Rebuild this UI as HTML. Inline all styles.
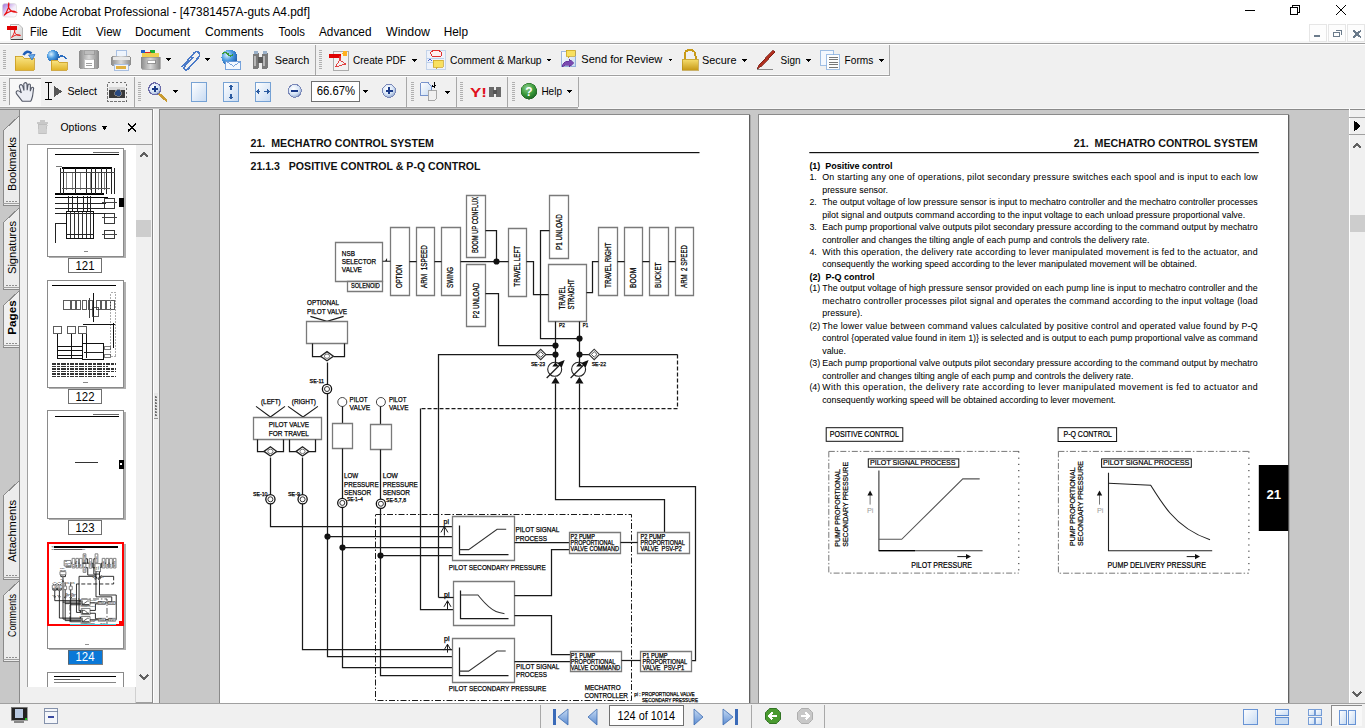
<!DOCTYPE html><html><head><meta charset="utf-8"><style>html,body{margin:0;padding:0;width:1365px;height:728px;overflow:hidden;background:#f0f0f0;font-family:"Liberation Sans",sans-serif}svg{position:absolute;left:0;top:0;--k:1}text{font-family:"Liberation Sans",sans-serif;white-space:pre}#d1 path,#d1 rect,#d1 circle,#d1 ellipse{vector-effect:non-scaling-stroke}</style></head><body>
<svg width="1365" height="728" viewBox="0 0 1365 728" shape-rendering="crispEdges">
<rect x="0" y="0" width="1365" height="43" fill="#ffffff" stroke="none" stroke-width="1" />
<rect x="0" y="41" width="1365" height="2" fill="#f6f6f6" stroke="none" stroke-width="1" />
<rect x="0" y="43" width="1365" height="1" fill="#a0a0a0" stroke="none" stroke-width="1" />
<rect x="0" y="44" width="1365" height="1" fill="#ffffff" stroke="none" stroke-width="1" />
<rect x="0" y="45" width="1365" height="659" fill="#f0f0f0" stroke="none" stroke-width="1" />
<defs><linearGradient id="gApp" x1="0" y1="0" x2="1" y2="1"><stop offset="0" stop-color="#a070d8"/><stop offset="0.55" stop-color="#f4ecfa"/><stop offset="1" stop-color="#ffffff"/></linearGradient><linearGradient id="gDoc" x1="0" y1="0" x2="1" y2="1"><stop offset="0" stop-color="#ffffff"/><stop offset="1" stop-color="#d0d0d0"/></linearGradient></defs>
<rect x="2.5" y="3.5" width="14" height="13.5" rx="2.5" fill="url(#gApp)" stroke="#d8d8d8" stroke-width="0.6" shape-rendering="geometricPrecision"/>
<path d="M4 15.5 Q7 12 8.3 8 Q9.3 4.5 8.8 3.2 Q8 4.5 8.4 7 Q9.4 10 12 11.5 Q14 12.5 16.3 12.2 Q14 10.8 11 11.3 Q7 12.2 4 15.5" fill="none" stroke="#e81010" stroke-width="1.1" shape-rendering="geometricPrecision"/>
<text x="23" y="16" font-size="12" font-weight="normal" fill="#000" text-anchor="start" textLength="287" lengthAdjust="spacingAndGlyphs" >Adobe Acrobat Professional - [47381457A-guts A4.pdf]</text>
<line x1="1245" y1="10.5" x2="1255" y2="10.5" stroke="#000" stroke-width="1" />
<rect x="1290.5" y="7.5" width="7" height="7" fill="none" stroke="#000" stroke-width="1" />
<path d="M1292.5 7.5 V5.5 H1299.5 V12.5 H1297.5" stroke="#000" fill="none" stroke-width="1" />
<line x1="1336" y1="5" x2="1346" y2="15" stroke="#000" stroke-width="1" />
<line x1="1346" y1="5" x2="1336" y2="15" stroke="#000" stroke-width="1" />
<path d="M10.5 24.5 H19 L22.5 28 V39.5 H10.5 Z" fill="url(#gDoc)" stroke="#a8a8a8" stroke-width="0.8" shape-rendering="geometricPrecision"/>
<rect x="10.5" y="39" width="12" height="1" fill="#404040" stroke="none" stroke-width="1" />
<rect x="7" y="26" width="10" height="3.5" fill="#e00000" stroke="none" stroke-width="1" />
<path d="M11.5 37.5 Q13.5 35 14.5 32 Q15 30 14.8 29.5 Q14.2 30.5 14.6 32 Q15.3 34 17 35 Q19 35.6 20.5 35.4 Q19 34.6 16.8 34.8 Q14 35.5 11.5 37.5" fill="none" stroke="#e81010" stroke-width="0.9" shape-rendering="geometricPrecision"/>
<text x="30" y="36" font-size="12" font-weight="normal" fill="#000" text-anchor="start" textLength="17.6" lengthAdjust="spacingAndGlyphs" >File</text>
<text x="62" y="36" font-size="12" font-weight="normal" fill="#000" text-anchor="start" textLength="19" lengthAdjust="spacingAndGlyphs" >Edit</text>
<text x="96" y="36" font-size="12" font-weight="normal" fill="#000" text-anchor="start" textLength="25" lengthAdjust="spacingAndGlyphs" >View</text>
<text x="135" y="36" font-size="12" font-weight="normal" fill="#000" text-anchor="start" textLength="55" lengthAdjust="spacingAndGlyphs" >Document</text>
<text x="205" y="36" font-size="12" font-weight="normal" fill="#000" text-anchor="start" textLength="58.5" lengthAdjust="spacingAndGlyphs" >Comments</text>
<text x="278.5" y="36" font-size="12" font-weight="normal" fill="#000" text-anchor="start" textLength="26.5" lengthAdjust="spacingAndGlyphs" >Tools</text>
<text x="319" y="36" font-size="12" font-weight="normal" fill="#000" text-anchor="start" textLength="52.5" lengthAdjust="spacingAndGlyphs" >Advanced</text>
<text x="386" y="36" font-size="12" font-weight="normal" fill="#000" text-anchor="start" textLength="44" lengthAdjust="spacingAndGlyphs" >Window</text>
<text x="443.7" y="36" font-size="12" font-weight="normal" fill="#000" text-anchor="start" textLength="24.3" lengthAdjust="spacingAndGlyphs" >Help</text>
<rect x="1309.5" y="24.5" width="17" height="17" fill="#fdfdfd" stroke="#e6e6e6" stroke-width="1" />
<rect x="1328.5" y="24.5" width="17" height="17" fill="#fdfdfd" stroke="#e6e6e6" stroke-width="1" />
<rect x="1347.5" y="24.5" width="17" height="17" fill="#fdfdfd" stroke="#e6e6e6" stroke-width="1" />
<rect x="1314" y="35" width="6" height="2" fill="#6b7b8b" stroke="none" stroke-width="1" />
<rect x="1333.5" y="32.5" width="6" height="4" fill="none" stroke="#6b7b8b" stroke-width="1.3" />
<path d="M1335.5 30.5 H1341.5 V34.5" stroke="#6b7b8b" fill="none" stroke-width="1.3" />
<path d="M1353.5 30.5 L1361 37.5 M1361 30.5 L1353.5 37.5" stroke="#6b7b8b" fill="none" stroke-width="2" />
<rect x="0" y="74" width="890" height="1" fill="#f8f8f8" stroke="none" stroke-width="1" />
<rect x="0" y="75" width="890" height="1" fill="#a0a0a0" stroke="none" stroke-width="1" />
<rect x="0" y="76" width="890" height="1" fill="#ffffff" stroke="none" stroke-width="1" />
<rect x="0" y="106" width="578" height="1" fill="#f8f8f8" stroke="none" stroke-width="1" />
<rect x="0" y="107" width="578" height="1" fill="#a0a0a0" stroke="none" stroke-width="1" />
<rect x="0" y="108" width="578" height="1" fill="#c8c8c8" stroke="none" stroke-width="1" />
<rect x="578" y="108" width="787" height="1" fill="#f8f8f8" stroke="none" stroke-width="1" />
<line x1="315.5" y1="45" x2="315.5" y2="75" stroke="#a8a8a8" stroke-width="1" />
<line x1="889.5" y1="45" x2="889.5" y2="75" stroke="#a8a8a8" stroke-width="1" />
<line x1="134.5" y1="77" x2="134.5" y2="107" stroke="#a8a8a8" stroke-width="1" />
<line x1="406.5" y1="77" x2="406.5" y2="107" stroke="#a8a8a8" stroke-width="1" />
<line x1="456.5" y1="77" x2="456.5" y2="107" stroke="#a8a8a8" stroke-width="1" />
<line x1="507.5" y1="77" x2="507.5" y2="107" stroke="#a8a8a8" stroke-width="1" />
<line x1="578.5" y1="77" x2="578.5" y2="107" stroke="#a8a8a8" stroke-width="1" />
<rect x="3" y="50" width="3" height="1" fill="#b0b0b0" stroke="none" stroke-width="1" />
<rect x="3" y="52" width="3" height="1" fill="#b0b0b0" stroke="none" stroke-width="1" />
<rect x="3" y="54" width="3" height="1" fill="#b0b0b0" stroke="none" stroke-width="1" />
<rect x="3" y="56" width="3" height="1" fill="#b0b0b0" stroke="none" stroke-width="1" />
<rect x="3" y="58" width="3" height="1" fill="#b0b0b0" stroke="none" stroke-width="1" />
<rect x="3" y="60" width="3" height="1" fill="#b0b0b0" stroke="none" stroke-width="1" />
<rect x="3" y="62" width="3" height="1" fill="#b0b0b0" stroke="none" stroke-width="1" />
<rect x="3" y="64" width="3" height="1" fill="#b0b0b0" stroke="none" stroke-width="1" />
<rect x="3" y="66" width="3" height="1" fill="#b0b0b0" stroke="none" stroke-width="1" />
<rect x="3" y="68" width="3" height="1" fill="#b0b0b0" stroke="none" stroke-width="1" />
<rect x="319" y="50" width="3" height="1" fill="#b0b0b0" stroke="none" stroke-width="1" />
<rect x="319" y="52" width="3" height="1" fill="#b0b0b0" stroke="none" stroke-width="1" />
<rect x="319" y="54" width="3" height="1" fill="#b0b0b0" stroke="none" stroke-width="1" />
<rect x="319" y="56" width="3" height="1" fill="#b0b0b0" stroke="none" stroke-width="1" />
<rect x="319" y="58" width="3" height="1" fill="#b0b0b0" stroke="none" stroke-width="1" />
<rect x="319" y="60" width="3" height="1" fill="#b0b0b0" stroke="none" stroke-width="1" />
<rect x="319" y="62" width="3" height="1" fill="#b0b0b0" stroke="none" stroke-width="1" />
<rect x="319" y="64" width="3" height="1" fill="#b0b0b0" stroke="none" stroke-width="1" />
<rect x="319" y="66" width="3" height="1" fill="#b0b0b0" stroke="none" stroke-width="1" />
<rect x="319" y="68" width="3" height="1" fill="#b0b0b0" stroke="none" stroke-width="1" />
<rect x="3" y="82" width="3" height="1" fill="#b0b0b0" stroke="none" stroke-width="1" />
<rect x="3" y="84" width="3" height="1" fill="#b0b0b0" stroke="none" stroke-width="1" />
<rect x="3" y="86" width="3" height="1" fill="#b0b0b0" stroke="none" stroke-width="1" />
<rect x="3" y="88" width="3" height="1" fill="#b0b0b0" stroke="none" stroke-width="1" />
<rect x="3" y="90" width="3" height="1" fill="#b0b0b0" stroke="none" stroke-width="1" />
<rect x="3" y="92" width="3" height="1" fill="#b0b0b0" stroke="none" stroke-width="1" />
<rect x="3" y="94" width="3" height="1" fill="#b0b0b0" stroke="none" stroke-width="1" />
<rect x="3" y="96" width="3" height="1" fill="#b0b0b0" stroke="none" stroke-width="1" />
<rect x="3" y="98" width="3" height="1" fill="#b0b0b0" stroke="none" stroke-width="1" />
<rect x="3" y="100" width="3" height="1" fill="#b0b0b0" stroke="none" stroke-width="1" />
<rect x="138" y="82" width="3" height="1" fill="#b0b0b0" stroke="none" stroke-width="1" />
<rect x="138" y="84" width="3" height="1" fill="#b0b0b0" stroke="none" stroke-width="1" />
<rect x="138" y="86" width="3" height="1" fill="#b0b0b0" stroke="none" stroke-width="1" />
<rect x="138" y="88" width="3" height="1" fill="#b0b0b0" stroke="none" stroke-width="1" />
<rect x="138" y="90" width="3" height="1" fill="#b0b0b0" stroke="none" stroke-width="1" />
<rect x="138" y="92" width="3" height="1" fill="#b0b0b0" stroke="none" stroke-width="1" />
<rect x="138" y="94" width="3" height="1" fill="#b0b0b0" stroke="none" stroke-width="1" />
<rect x="138" y="96" width="3" height="1" fill="#b0b0b0" stroke="none" stroke-width="1" />
<rect x="138" y="98" width="3" height="1" fill="#b0b0b0" stroke="none" stroke-width="1" />
<rect x="138" y="100" width="3" height="1" fill="#b0b0b0" stroke="none" stroke-width="1" />
<rect x="411" y="82" width="3" height="1" fill="#b0b0b0" stroke="none" stroke-width="1" />
<rect x="411" y="84" width="3" height="1" fill="#b0b0b0" stroke="none" stroke-width="1" />
<rect x="411" y="86" width="3" height="1" fill="#b0b0b0" stroke="none" stroke-width="1" />
<rect x="411" y="88" width="3" height="1" fill="#b0b0b0" stroke="none" stroke-width="1" />
<rect x="411" y="90" width="3" height="1" fill="#b0b0b0" stroke="none" stroke-width="1" />
<rect x="411" y="92" width="3" height="1" fill="#b0b0b0" stroke="none" stroke-width="1" />
<rect x="411" y="94" width="3" height="1" fill="#b0b0b0" stroke="none" stroke-width="1" />
<rect x="411" y="96" width="3" height="1" fill="#b0b0b0" stroke="none" stroke-width="1" />
<rect x="411" y="98" width="3" height="1" fill="#b0b0b0" stroke="none" stroke-width="1" />
<rect x="411" y="100" width="3" height="1" fill="#b0b0b0" stroke="none" stroke-width="1" />
<rect x="460" y="82" width="3" height="1" fill="#b0b0b0" stroke="none" stroke-width="1" />
<rect x="460" y="84" width="3" height="1" fill="#b0b0b0" stroke="none" stroke-width="1" />
<rect x="460" y="86" width="3" height="1" fill="#b0b0b0" stroke="none" stroke-width="1" />
<rect x="460" y="88" width="3" height="1" fill="#b0b0b0" stroke="none" stroke-width="1" />
<rect x="460" y="90" width="3" height="1" fill="#b0b0b0" stroke="none" stroke-width="1" />
<rect x="460" y="92" width="3" height="1" fill="#b0b0b0" stroke="none" stroke-width="1" />
<rect x="460" y="94" width="3" height="1" fill="#b0b0b0" stroke="none" stroke-width="1" />
<rect x="460" y="96" width="3" height="1" fill="#b0b0b0" stroke="none" stroke-width="1" />
<rect x="460" y="98" width="3" height="1" fill="#b0b0b0" stroke="none" stroke-width="1" />
<rect x="460" y="100" width="3" height="1" fill="#b0b0b0" stroke="none" stroke-width="1" />
<rect x="512" y="82" width="3" height="1" fill="#b0b0b0" stroke="none" stroke-width="1" />
<rect x="512" y="84" width="3" height="1" fill="#b0b0b0" stroke="none" stroke-width="1" />
<rect x="512" y="86" width="3" height="1" fill="#b0b0b0" stroke="none" stroke-width="1" />
<rect x="512" y="88" width="3" height="1" fill="#b0b0b0" stroke="none" stroke-width="1" />
<rect x="512" y="90" width="3" height="1" fill="#b0b0b0" stroke="none" stroke-width="1" />
<rect x="512" y="92" width="3" height="1" fill="#b0b0b0" stroke="none" stroke-width="1" />
<rect x="512" y="94" width="3" height="1" fill="#b0b0b0" stroke="none" stroke-width="1" />
<rect x="512" y="96" width="3" height="1" fill="#b0b0b0" stroke="none" stroke-width="1" />
<rect x="512" y="98" width="3" height="1" fill="#b0b0b0" stroke="none" stroke-width="1" />
<rect x="512" y="100" width="3" height="1" fill="#b0b0b0" stroke="none" stroke-width="1" />
<defs>
<linearGradient id="gFold" x1="0" y1="0" x2="0" y2="1"><stop offset="0" stop-color="#fbe88a"/><stop offset="1" stop-color="#e2b52a"/></linearGradient>
<linearGradient id="gGray" x1="0" y1="0" x2="1" y2="0"><stop offset="0" stop-color="#8a8a8a"/><stop offset="0.5" stop-color="#d8d8d8"/><stop offset="1" stop-color="#8a8a8a"/></linearGradient>
<radialGradient id="gGlobe" cx="0.35" cy="0.35" r="0.7"><stop offset="0" stop-color="#d8f0ff"/><stop offset="0.5" stop-color="#4a9ae0"/><stop offset="1" stop-color="#1d5aa8"/></radialGradient>
<linearGradient id="gPage" x1="0" y1="0" x2="1" y2="1"><stop offset="0" stop-color="#ffffff"/><stop offset="1" stop-color="#c6daf2"/></linearGradient>
<radialGradient id="gZoom" cx="0.4" cy="0.35" r="0.7"><stop offset="0" stop-color="#ffffff"/><stop offset="0.6" stop-color="#d6e4f6"/><stop offset="1" stop-color="#8ea6cc"/></radialGradient>
<radialGradient id="gHelp" cx="0.4" cy="0.3" r="0.7"><stop offset="0" stop-color="#8fd08f"/><stop offset="0.6" stop-color="#3a9a3a"/><stop offset="1" stop-color="#1f6a25"/></radialGradient>
<linearGradient id="gLock" x1="0" y1="0" x2="0" y2="1"><stop offset="0" stop-color="#f8e070"/><stop offset="1" stop-color="#c89a18"/></linearGradient>
</defs>
<path d="M15 56 h7 l2 2 h10 v12 h-19 z" stroke="#c89a20" fill="url(#gFold)" stroke-width="0.8" />
<path d="M23.5 55 q3 -5.5 8 -1.5" stroke="#1f5fb8" fill="none" stroke-width="2.6" shape-rendering="geometricPrecision"/>
<path d="M28.5 55 l6.5 -0.5 l-3 5.5 z" stroke="#1f5fb8" fill="#6ab0ec" stroke-width="0.7" shape-rendering="geometricPrecision"/>
<circle cx="53" cy="56" r="6" fill="url(#gGlobe)"/>
<path d="M51 60 h6 l2 2 h8 v8 h-16 z" stroke="#c89a20" fill="url(#gFold)" stroke-width="0.8" />
<path d="M59 57 q4 -3 7 2" stroke="#2a6cc0" fill="none" stroke-width="1.6" />
<rect x="79" y="50" width="20" height="19" fill="url(#gGray)" stroke="none" stroke-width="1" rx="2.5"/>
<rect x="84" y="50" width="10" height="4" fill="#bdbdbd" stroke="#8a8a8a" stroke-width="0.5" />
<rect x="84" y="59" width="10" height="9" fill="#ffffff" stroke="#8a8a8a" stroke-width="0.5" />
<line x1="86" y1="63" x2="92" y2="63" stroke="#888" stroke-width="0.8" />
<line x1="86" y1="65.5" x2="92" y2="65.5" stroke="#888" stroke-width="0.8" />
<rect x="116" y="50" width="10" height="8" fill="#eef4fc" stroke="#8aaad8" stroke-width="0.7" />
<rect x="111" y="56" width="20" height="10" fill="url(#gGray)" stroke="none" stroke-width="1" rx="2.5"/>
<rect x="112.5" y="57" width="17" height="3" fill="#e8e8e8" stroke="none" stroke-width="1" />
<rect x="114" y="64" width="14" height="6" fill="#f4f4f4" stroke="#8aaad8" stroke-width="0.7" />
<rect x="116" y="66" width="10" height="3" fill="#e0b040" stroke="none" stroke-width="1" />
<rect x="141" y="50" width="4" height="3" fill="#2060c8" stroke="none" stroke-width="1" />
<rect x="150" y="50" width="5" height="3" fill="#20b030" stroke="none" stroke-width="1" />
<rect x="145" y="52" width="6" height="3" fill="#e02020" stroke="none" stroke-width="1" />
<rect x="142" y="53" width="17" height="4" fill="#f0d050" stroke="none" stroke-width="1" />
<path d="M141 57 h19 v12 h-18 l-1 -3 z" stroke="#888" fill="url(#gGray)" stroke-width="0.6" />
<rect x="147" y="60" width="8" height="3" fill="#ffffff" stroke="#777" stroke-width="0.6" />
<path d="M166 58 h5 l-2.5 3 z" stroke="none" fill="#000" stroke-width="1" />
<path d="M182 67 l12 -14 q3 -3 5 0 q2 2 -1 5 l-10 11 q-2 2 -3.5 0.5 q-1.5 -1.5 0.5 -3.5 l8 -9" stroke="#4a7ac8" fill="none" stroke-width="1.6" />
<path d="M205 58 h5 l-2.5 3 z" stroke="none" fill="#000" stroke-width="1" />
<circle cx="229.5" cy="57.5" r="8" fill="url(#gGlobe)"/>
<path d="M222 54 q3 -3 6 0 q2 3 5 1" stroke="#3a9a3a" fill="none" stroke-width="1.5" />
<rect x="225.5" y="61.5" width="15" height="8" fill="#f4f8fe" stroke="#6a9ad8" stroke-width="0.9" />
<path d="M225.5 61.5 l7.5 5 l7.5 -5" stroke="#6a9ad8" fill="none" stroke-width="0.9" />
<rect x="253" y="53" width="6" height="16" fill="#7a7a7a" stroke="none" stroke-width="1" rx="2"/>
<rect x="262" y="53" width="6" height="16" fill="#7a7a7a" stroke="none" stroke-width="1" rx="2"/>
<rect x="254" y="51" width="4" height="3" fill="#9ab0c8" stroke="none" stroke-width="1" />
<rect x="263" y="51" width="4" height="3" fill="#9ab0c8" stroke="none" stroke-width="1" />
<rect x="258" y="57" width="5" height="6" fill="#5a5a5a" stroke="none" stroke-width="1" />
<rect x="254" y="56" width="1.5" height="10" fill="#b8b8b8" stroke="none" stroke-width="1" />
<rect x="263" y="56" width="1.5" height="10" fill="#b8b8b8" stroke="none" stroke-width="1" />
<text x="274.7" y="64" font-size="11" font-weight="normal" fill="#000" text-anchor="start" textLength="34.7" lengthAdjust="spacingAndGlyphs" >Search</text>
<rect x="333" y="51" width="15" height="19" fill="#f2f2f2" stroke="#9a9a9a" stroke-width="0.8" />
<rect x="329" y="53.5" width="12" height="4" fill="#e00000" stroke="none" stroke-width="1" />
<path d="M335 67 l4 -6 l1 -5 l1 5 l5 3 z" stroke="#e03030" fill="none" stroke-width="0.9" />
<circle cx="345" cy="53.5" r="2.5" fill="#ffb020"/>
<text x="353" y="64" font-size="11" font-weight="normal" fill="#000" text-anchor="start" textLength="53" lengthAdjust="spacingAndGlyphs" >Create PDF</text>
<path d="M412 59 h5 l-2.5 3 z" stroke="none" fill="#000" stroke-width="1" />
<rect x="426" y="50" width="19.5" height="19.5" fill="#eef2fa" stroke="#a8c0e0" stroke-width="0.6" />
<path d="M431 52 q2 -2 5 -1 q3 -1 5 1 q2 2 0 4 h-9 q-2 -2 -1 -4 z" stroke="#e03030" fill="#fff0f0" stroke-width="1" />
<line x1="427" y1="58" x2="444" y2="58" stroke="#9ab8e0" stroke-width="0.6" />
<line x1="427" y1="62" x2="435" y2="62" stroke="#9ab8e0" stroke-width="0.6" />
<path d="M428 61 l2 -2 l2 2" stroke="#2040c0" fill="none" stroke-width="0.8" />
<path d="M433 60 h10 v7 h-5 l-2 2 v-2 h-3 z" stroke="#c8a020" fill="#f8e060" stroke-width="0.7" />
<text x="450" y="64" font-size="11" font-weight="normal" fill="#000" text-anchor="start" textLength="91.6" lengthAdjust="spacingAndGlyphs" >Comment &amp; Markup</text>
<path d="M546.5 59 h5 l-2.5 3 z" stroke="none" fill="#000" stroke-width="1" />
<rect x="561" y="51" width="14.5" height="15.5" fill="url(#gPage)" stroke="#7a9ad0" stroke-width="0.7" />
<path d="M566 50 h9 v6 h-5 l-2 2 v-2 h-2 z" stroke="#c8a020" fill="#f8e060" stroke-width="0.7" />
<path d="M562 66 q1 -5 7 -5 v-2 l5 4 l-5 4 v-2 q-4 0 -7 2 z" stroke="#5a2a90" fill="#7a4ab0" stroke-width="0.6" />
<text x="581.3" y="63" font-size="11" font-weight="normal" fill="#000" text-anchor="start" textLength="81" lengthAdjust="spacingAndGlyphs" >Send for Review</text>
<path d="M668 58.5 h5 l-2.5 3 z" stroke="none" fill="#000" stroke-width="1" />
<path d="M684.5 60 v-4 q0 -6 5.5 -6 q5.5 0 5.5 6 v4" stroke="#c89a18" fill="none" stroke-width="2" />
<rect x="682" y="59" width="16" height="11" fill="url(#gLock)" stroke="#b08810" stroke-width="0.6" />
<text x="702" y="64" font-size="11" font-weight="normal" fill="#000" text-anchor="start" textLength="34.5" lengthAdjust="spacingAndGlyphs" >Secure</text>
<path d="M742 59 h5 l-2.5 3 z" stroke="none" fill="#000" stroke-width="1" />
<path d="M757 69 l2 -4 l13 -14 q2 -1 3 1 l-13 14 z" stroke="#701810" fill="#b03020" stroke-width="0.7" />
<line x1="757" y1="69.5" x2="773" y2="69.5" stroke="#707070" stroke-width="0.8" />
<text x="780.5" y="64" font-size="11" font-weight="normal" fill="#000" text-anchor="start" textLength="20" lengthAdjust="spacingAndGlyphs" >Sign</text>
<path d="M806 59 h5 l-2.5 3 z" stroke="none" fill="#000" stroke-width="1" />
<rect x="820.5" y="50.5" width="13" height="15" fill="#f4f8fe" stroke="#8ab0e0" stroke-width="0.8" />
<rect x="826.5" y="54.5" width="13" height="15" fill="#fdfdfd" stroke="#8ab0e0" stroke-width="0.8" />
<line x1="828.5" y1="57" x2="837.5" y2="57" stroke="#555" stroke-width="0.8" />
<line x1="828.5" y1="59.5" x2="837.5" y2="59.5" stroke="#555" stroke-width="0.8" />
<line x1="828.5" y1="62" x2="837.5" y2="62" stroke="#555" stroke-width="0.8" />
<line x1="828.5" y1="64.5" x2="837.5" y2="64.5" stroke="#555" stroke-width="0.8" />
<line x1="828.5" y1="67" x2="837.5" y2="67" stroke="#555" stroke-width="0.8" />
<text x="844.6" y="64" font-size="11" font-weight="normal" fill="#000" text-anchor="start" textLength="28.7" lengthAdjust="spacingAndGlyphs" >Forms</text>
<path d="M879 59 h5 l-2.5 3 z" stroke="none" fill="#000" stroke-width="1" />
<rect x="9.5" y="78.5" width="31" height="27" fill="#f8f8f8" stroke="none" stroke-width="1" />
<path d="M9.5 105 V78.5 H40.5" stroke="#a0a0a0" fill="none" stroke-width="1" />
<path d="M22.4 101.3 L16.8 94.2 Q15.2 91.8 17.4 90.8 Q19.2 90.2 21.4 93 L19.4 86.8 Q19.4 84.4 21.2 84.6 Q22.6 84.9 23 87 L24 90.5 L23.8 83.8 Q25.3 81.6 26.9 83.6 L27.2 90.2 L28 84.8 Q29.2 83.2 30.4 84.9 L30.3 91.2 L31.3 88.2 Q32.8 86.3 33.6 88.3 L32.6 96 Q31.6 100 30.7 101.3 Z" stroke="#555a68" fill="#eceef5" stroke-width="1.1" shape-rendering="geometricPrecision"/>
<path d="M45 82.5 h3.5 M48.5 82.5 h3.5 M48.5 82.5 v17 M45 99.5 h7" stroke="#000" fill="none" stroke-width="1.2" />
<path d="M54 86 l8 5.5 l-8 5.5 z" stroke="none" fill="#555" stroke-width="1" />
<text x="67.4" y="94.6" font-size="11" font-weight="normal" fill="#000" text-anchor="start" textLength="29.5" lengthAdjust="spacingAndGlyphs" >Select</text>
<rect x="107.5" y="82.5" width="19" height="19" fill="none" stroke="#555" stroke-width="0.8" stroke-dasharray="2.5 1.5"/>
<rect x="109" y="87" width="16" height="11" fill="#3a3a3a" stroke="none" stroke-width="1" rx="1"/>
<rect x="109" y="87" width="16" height="3" fill="#d8d8d8" stroke="none" stroke-width="1" />
<circle cx="118" cy="93" r="3.5" fill="#2a4a80" stroke="#888" stroke-width="0.8"/>
<line x1="158" y1="93" x2="167" y2="101" stroke="#c89a30" stroke-width="2.4" />
<circle cx="154.7" cy="88.8" r="6" fill="url(#gZoom)" stroke="#6a6aa8" stroke-width="1.2"/>
<path d="M151.5 88.8 h6.5 M154.7 85.5 v6.5" stroke="#1a3a88" fill="none" stroke-width="1.8" />
<path d="M173 90 h5 l-2.5 3 z" stroke="none" fill="#000" stroke-width="1" />
<rect x="191.5" y="82.5" width="15" height="19" fill="url(#gPage)" stroke="#6a9ad0" stroke-width="0.9" />
<rect x="223.5" y="82.5" width="15" height="19" fill="url(#gPage)" stroke="#6a9ad0" stroke-width="0.9" />
<path d="M231 85 v5 M229 87 l2 -2 l2 2 M231 94 v5 M229 97 l2 2 l2 -2" stroke="#2a5aa0" fill="none" stroke-width="1.2" />
<rect x="255.5" y="82.5" width="15" height="19" fill="url(#gPage)" stroke="#6a9ad0" stroke-width="0.9" />
<path d="M257 91.5 h3 M259 89.5 l-2 2 l2 2 M264 91.5 h5 M267 89.5 l2 2 l-2 2" stroke="#2a5aa0" fill="none" stroke-width="1.2" />
<circle cx="294.8" cy="90.8" r="6.5" fill="url(#gZoom)" stroke="#7a88b8" stroke-width="1"/>
<path d="M291.3 90.8 h7" stroke="#1a3a88" fill="none" stroke-width="1.8" />
<circle cx="389" cy="90.8" r="6.5" fill="url(#gZoom)" stroke="#7a88b8" stroke-width="1"/>
<path d="M385.5 90.8 h7" stroke="#1a3a88" fill="none" stroke-width="1.8" />
<path d="M389 87.3 v7" stroke="#1a3a88" fill="none" stroke-width="1.8" />
<rect x="311.5" y="81.5" width="48" height="20" fill="#ffffff" stroke="#707070" stroke-width="1" />
<text x="316.7" y="94.6" font-size="12" font-weight="normal" fill="#000" text-anchor="start" textLength="38.5" lengthAdjust="spacingAndGlyphs" >66.67%</text>
<path d="M363 90 h5 l-2.5 3 z" stroke="none" fill="#000" stroke-width="1" />
<path d="M420.5 82.5 h8 l3 3 v10 h-11 z" stroke="#6a8ac8" fill="url(#gPage)" stroke-width="0.9" />
<path d="M428 90.5 h8.5 v7 l-3 3 h-5.5 z" stroke="#a0a0a0" fill="#f0f0f0" stroke-width="0.9" />
<path d="M434 82 v5 l-2 -1.5 M434 87 l2 -1.5" stroke="#000" fill="none" stroke-width="1" />
<path d="M445 91 h5 l-2.5 3 z" stroke="none" fill="#000" stroke-width="1" />
<text x="470" y="97" font-size="12" font-weight="bold" fill="#e01020" text-anchor="start" textLength="17" lengthAdjust="spacingAndGlyphs" font-family="Liberation Serif">Y!</text>
<rect x="489" y="87" width="5" height="10" fill="#6a6a6a" stroke="none" stroke-width="1" rx="1.5"/>
<rect x="496" y="87" width="5" height="10" fill="#6a6a6a" stroke="none" stroke-width="1" rx="1.5"/>
<rect x="493" y="90" width="4" height="4" fill="#555" stroke="none" stroke-width="1" />
<circle cx="529" cy="91.2" r="8" fill="url(#gHelp)" stroke="#2a6a2a" stroke-width="0.6"/>
<text x="529" y="95.5" font-size="12" font-weight="bold" fill="#ffffff" text-anchor="middle" >?</text>
<text x="541.4" y="95" font-size="11" font-weight="normal" fill="#000" text-anchor="start" textLength="20.6" lengthAdjust="spacingAndGlyphs" >Help</text>
<path d="M567 90 h5 l-2.5 3 z" stroke="none" fill="#000" stroke-width="1" />
<rect x="0" y="109" width="20" height="595" fill="#c8c8c8" stroke="none" stroke-width="1" />
<line x1="19.5" y1="109" x2="19.5" y2="703" stroke="#8a8a8a" stroke-width="1" />
<path d="M20 115 L3 131 V205 H20" stroke="#8a8a8a" fill="#ececec" stroke-width="1" />
<rect x="6" y="201" width="2" height="1" fill="#909090" stroke="none" stroke-width="1" />
<rect x="9" y="201" width="2" height="1" fill="#909090" stroke="none" stroke-width="1" />
<rect x="12" y="201" width="2" height="1" fill="#909090" stroke="none" stroke-width="1" />
<rect x="15" y="201" width="2" height="1" fill="#909090" stroke="none" stroke-width="1" />
<rect x="3" y="203" width="17" height="1" fill="#a0a0a0" stroke="none" stroke-width="1" />
<text x="0" y="0" font-size="11" font-weight="normal" fill="#000" text-anchor="middle" textLength="54" lengthAdjust="spacingAndGlyphs" transform="translate(15.5 164) rotate(-90)">Bookmarks</text>
<path d="M20 207 L3 223 V289 H20" stroke="#8a8a8a" fill="#ececec" stroke-width="1" />
<rect x="6" y="285" width="2" height="1" fill="#909090" stroke="none" stroke-width="1" />
<rect x="9" y="285" width="2" height="1" fill="#909090" stroke="none" stroke-width="1" />
<rect x="12" y="285" width="2" height="1" fill="#909090" stroke="none" stroke-width="1" />
<rect x="15" y="285" width="2" height="1" fill="#909090" stroke="none" stroke-width="1" />
<rect x="3" y="287" width="17" height="1" fill="#a0a0a0" stroke="none" stroke-width="1" />
<text x="0" y="0" font-size="11" font-weight="normal" fill="#000" text-anchor="middle" textLength="53" lengthAdjust="spacingAndGlyphs" transform="translate(15.5 247.5) rotate(-90)">Signatures</text>
<path d="M20 290 L3 306 V347 H20" stroke="#8a8a8a" fill="#f0f0f0" stroke-width="1" />
<rect x="6" y="343" width="2" height="1" fill="#909090" stroke="none" stroke-width="1" />
<rect x="9" y="343" width="2" height="1" fill="#909090" stroke="none" stroke-width="1" />
<rect x="12" y="343" width="2" height="1" fill="#909090" stroke="none" stroke-width="1" />
<rect x="15" y="343" width="2" height="1" fill="#909090" stroke="none" stroke-width="1" />
<rect x="3" y="345" width="17" height="1" fill="#a0a0a0" stroke="none" stroke-width="1" />
<text x="0" y="0" font-size="11" font-weight="bold" fill="#000" text-anchor="middle" textLength="34.3" lengthAdjust="spacingAndGlyphs" transform="translate(15.5 317.5) rotate(-90)">Pages</text>
<path d="M20 480 L3 496 V579 H20" stroke="#8a8a8a" fill="#ececec" stroke-width="1" />
<rect x="6" y="575" width="2" height="1" fill="#909090" stroke="none" stroke-width="1" />
<rect x="9" y="575" width="2" height="1" fill="#909090" stroke="none" stroke-width="1" />
<rect x="12" y="575" width="2" height="1" fill="#909090" stroke="none" stroke-width="1" />
<rect x="15" y="575" width="2" height="1" fill="#909090" stroke="none" stroke-width="1" />
<rect x="3" y="577" width="17" height="1" fill="#a0a0a0" stroke="none" stroke-width="1" />
<text x="0" y="0" font-size="11" font-weight="normal" fill="#000" text-anchor="middle" textLength="62" lengthAdjust="spacingAndGlyphs" transform="translate(15.5 531) rotate(-90)">Attachments</text>
<path d="M20 580 L3 596 V661 H20" stroke="#8a8a8a" fill="#ececec" stroke-width="1" />
<rect x="6" y="657" width="2" height="1" fill="#909090" stroke="none" stroke-width="1" />
<rect x="9" y="657" width="2" height="1" fill="#909090" stroke="none" stroke-width="1" />
<rect x="12" y="657" width="2" height="1" fill="#909090" stroke="none" stroke-width="1" />
<rect x="15" y="657" width="2" height="1" fill="#909090" stroke="none" stroke-width="1" />
<rect x="3" y="659" width="17" height="1" fill="#a0a0a0" stroke="none" stroke-width="1" />
<text x="0" y="0" font-size="11" font-weight="normal" fill="#000" text-anchor="middle" textLength="43" lengthAdjust="spacingAndGlyphs" transform="translate(15.5 615.5) rotate(-90)">Comments</text>
<line x1="19.5" y1="109" x2="19.5" y2="703" stroke="#8a8a8a" stroke-width="1" />
<rect x="20" y="109" width="133" height="595" fill="#f0f0f0" stroke="none" stroke-width="1" />
<line x1="0" y1="109.5" x2="159" y2="109.5" stroke="#8a8a8a" stroke-width="1" />
<line x1="152.5" y1="109" x2="152.5" y2="703" stroke="#8a8a8a" stroke-width="1" />
<rect x="37" y="122" width="11" height="2.5" fill="#c8c8c8" stroke="none" stroke-width="1" rx="1"/>
<rect x="40" y="120" width="5" height="2" fill="#c8c8c8" stroke="none" stroke-width="1" />
<path d="M38 124.5 h9 l-1 9 h-7 z" stroke="#b8b8b8" fill="#d0d0d0" stroke-width="0.6" />
<text x="60.5" y="131" font-size="11" font-weight="normal" fill="#000" text-anchor="start" textLength="36" lengthAdjust="spacingAndGlyphs" >Options</text>
<path d="M102 126 h5 l-2.5 3 z" stroke="#000" fill="#000" stroke-width="1" />
<path d="M128 124 L136 131 M136 124 L128 131" stroke="#000" fill="none" stroke-width="1.6" />
<line x1="27" y1="144.5" x2="152" y2="144.5" stroke="#a0a0a0" stroke-width="1" />
<rect x="27" y="145" width="109" height="542" fill="#ffffff" stroke="none" stroke-width="1" />
<line x1="27.5" y1="144" x2="27.5" y2="687" stroke="#a0a0a0" stroke-width="1" />
<rect x="136" y="145" width="16" height="558" fill="#f0f0f0" stroke="none" stroke-width="1" />
<rect x="136" y="220" width="15" height="17" fill="#cdcdcd" stroke="none" stroke-width="1" />
<path d="M140 157 l4 -4 l4 4" stroke="#606060" fill="none" stroke-width="1.6" />
<path d="M140 675 l4 4 l4 -4" stroke="#606060" fill="none" stroke-width="1.6" />
<rect x="27" y="687" width="109" height="16" fill="#f0f0f0" stroke="none" stroke-width="1" />
<line x1="27" y1="702.5" x2="152" y2="702.5" stroke="#a0a0a0" stroke-width="1" />
<line x1="135.5" y1="687" x2="135.5" y2="703" stroke="#d8d8d8" stroke-width="1" />
<rect x="153" y="109" width="6" height="595" fill="#f0f0f0" stroke="none" stroke-width="1" />
<line x1="153.5" y1="109" x2="153.5" y2="703" stroke="#ffffff" stroke-width="1" />
<defs><pattern id="dots" width="2" height="3" patternUnits="userSpaceOnUse"><rect width="1" height="1" fill="#999"/></pattern></defs>
<rect x="154" y="393" width="4" height="25" fill="#e6e6e6" stroke="none" stroke-width="1" />
<rect x="154" y="418" width="4" height="1" fill="#909090" stroke="none" stroke-width="1" />
<rect x="155" y="396" width="2" height="2" fill="#707070" stroke="none" stroke-width="1" />
<rect x="156" y="396" width="1" height="1" fill="#b0b0b0" stroke="none" stroke-width="1" />
<rect x="155" y="399" width="2" height="2" fill="#707070" stroke="none" stroke-width="1" />
<rect x="156" y="399" width="1" height="1" fill="#b0b0b0" stroke="none" stroke-width="1" />
<rect x="155" y="402" width="2" height="2" fill="#707070" stroke="none" stroke-width="1" />
<rect x="156" y="402" width="1" height="1" fill="#b0b0b0" stroke="none" stroke-width="1" />
<rect x="155" y="405" width="2" height="2" fill="#707070" stroke="none" stroke-width="1" />
<rect x="156" y="405" width="1" height="1" fill="#b0b0b0" stroke="none" stroke-width="1" />
<rect x="155" y="408" width="2" height="2" fill="#707070" stroke="none" stroke-width="1" />
<rect x="156" y="408" width="1" height="1" fill="#b0b0b0" stroke="none" stroke-width="1" />
<rect x="155" y="411" width="2" height="2" fill="#707070" stroke="none" stroke-width="1" />
<rect x="156" y="411" width="1" height="1" fill="#b0b0b0" stroke="none" stroke-width="1" />
<rect x="155" y="414" width="2" height="2" fill="#707070" stroke="none" stroke-width="1" />
<rect x="156" y="414" width="1" height="1" fill="#b0b0b0" stroke="none" stroke-width="1" />
<line x1="159.5" y1="109" x2="159.5" y2="703" stroke="#8a8a8a" stroke-width="1" />
<rect x="49" y="150" width="77" height="108" fill="#b0b0b0" stroke="none" stroke-width="1" />
<rect x="47.5" y="148.5" width="76" height="108" fill="#ffffff" stroke="#8a8a8a" stroke-width="1" />
<rect x="68.5" y="258.5" width="33" height="14" fill="#ffffff" stroke="#707070" stroke-width="1" />
<text x="85" y="269.5" font-size="12" font-weight="normal" fill="#000" text-anchor="middle" textLength="19" lengthAdjust="spacingAndGlyphs" >121</text>
<rect x="49" y="282" width="77" height="107" fill="#b0b0b0" stroke="none" stroke-width="1" />
<rect x="47.5" y="280.5" width="76" height="107" fill="#ffffff" stroke="#8a8a8a" stroke-width="1" />
<rect x="68.5" y="389.5" width="33" height="14" fill="#ffffff" stroke="#707070" stroke-width="1" />
<text x="85" y="400.5" font-size="12" font-weight="normal" fill="#000" text-anchor="middle" textLength="19" lengthAdjust="spacingAndGlyphs" >122</text>
<rect x="49" y="412" width="77" height="108" fill="#b0b0b0" stroke="none" stroke-width="1" />
<rect x="47.5" y="410.5" width="76" height="108" fill="#ffffff" stroke="#8a8a8a" stroke-width="1" />
<rect x="68.5" y="520.5" width="33" height="14" fill="#ffffff" stroke="#707070" stroke-width="1" />
<text x="85" y="531.5" font-size="12" font-weight="normal" fill="#000" text-anchor="middle" textLength="19" lengthAdjust="spacingAndGlyphs" >123</text>
<rect x="49" y="544" width="77" height="106" fill="#b0b0b0" stroke="none" stroke-width="1" />
<rect x="47.5" y="542.5" width="76" height="106" fill="#ffffff" stroke="#8a8a8a" stroke-width="1" />
<rect x="68" y="650" width="34" height="14" fill="#0a78d7" stroke="#606060" stroke-width="0.8" />
<text x="85" y="661" font-size="12" font-weight="normal" fill="#ffffff" text-anchor="middle" textLength="19" lengthAdjust="spacingAndGlyphs" >124</text>
<rect x="47.5" y="672.5" width="76" height="20" fill="#ffffff" stroke="#8a8a8a" stroke-width="1" />
<line x1="54" y1="676.5" x2="116" y2="676.5" stroke="#000" stroke-width="1" />
<line x1="54" y1="679.5" x2="80" y2="679.5" stroke="#333" stroke-width="0.8" />
<line x1="54" y1="682.5" x2="116" y2="682.5" stroke="#666" stroke-width="0.8" />
<rect x="27" y="687" width="109" height="16" fill="#f0f0f0" stroke="none" stroke-width="1" />
<line x1="135.5" y1="687" x2="135.5" y2="703" stroke="#d0d0d0" stroke-width="1" />
<rect x="55" y="153.5" width="64" height="1.2" fill="#000"/>
<rect x="93" y="152" width="26" height="1" fill="#666"/>
<rect x="56" y="165.5" width="6" height="1" fill="#777"/>
<rect x="62" y="167" width="50" height="1.6" fill="#000"/>
<rect x="55" y="193" width="49" height="1.6" fill="#000"/>
<rect x="55" y="196.5" width="53" height="1" fill="#000"/>
<rect x="60" y="168" width="0.9" height="26" fill="#222"/>
<rect x="63" y="168" width="0.9" height="26" fill="#222"/>
<rect x="75" y="168" width="0.9" height="26" fill="#222"/>
<rect x="86" y="168" width="0.9" height="26" fill="#222"/>
<rect x="91" y="168" width="0.9" height="26" fill="#222"/>
<rect x="95" y="168" width="0.9" height="26" fill="#222"/>
<rect x="101" y="168" width="0.9" height="26" fill="#222"/>
<rect x="106" y="168" width="0.9" height="26" fill="#222"/>
<rect x="111" y="168" width="0.9" height="26" fill="#222"/>
<rect x="114" y="168" width="0.9" height="26" fill="#222"/>
<rect x="66" y="173" width="0.8" height="17" fill="#888"/>
<rect x="72" y="173" width="0.8" height="17" fill="#888"/>
<rect x="80" y="173" width="0.8" height="17" fill="#888"/>
<rect x="90" y="173" width="0.8" height="17" fill="#888"/>
<rect x="98" y="173" width="0.8" height="17" fill="#888"/>
<rect x="104" y="173" width="0.8" height="17" fill="#888"/>
<rect x="60" y="172" width="55" height="0.8" fill="#444"/>
<rect x="62" y="188" width="48" height="0.8" fill="#555"/>
<rect x="55" y="203" width="51" height="0.9" fill="#222"/>
<rect x="55" y="208" width="51" height="0.9" fill="#222"/>
<rect x="55" y="213" width="51" height="0.9" fill="#222"/>
<rect x="68" y="196" width="0.9" height="16" fill="#222"/>
<rect x="72" y="196" width="0.9" height="16" fill="#222"/>
<rect x="77" y="196" width="0.9" height="16" fill="#222"/>
<rect x="83" y="196" width="0.9" height="16" fill="#222"/>
<rect x="87" y="196" width="0.9" height="16" fill="#222"/>
<rect x="90" y="196" width="0.9" height="16" fill="#222"/>
<rect x="66.5" y="211.5" width="27" height="27" fill="none" stroke="#111" stroke-width="1"/>
<rect x="70" y="212" width="0.8" height="26" fill="#333"/>
<rect x="74" y="212" width="0.8" height="26" fill="#333"/>
<rect x="78" y="212" width="0.8" height="26" fill="#333"/>
<rect x="82" y="212" width="0.8" height="26" fill="#333"/>
<rect x="86" y="212" width="0.8" height="26" fill="#333"/>
<rect x="90" y="212" width="0.8" height="26" fill="#333"/>
<rect x="66" y="234" width="28" height="1" fill="#222"/>
<rect x="55" y="223" width="11" height="0.9" fill="#222"/>
<rect x="55" y="223" width="0.9" height="20" fill="#222"/>
<rect x="55" y="242.5" width="39" height="0.9" fill="#222"/>
<rect x="104.5" y="198.5" width="10" height="10" fill="none" stroke="#222" stroke-width="0.9"/>
<rect x="102" y="202" width="15" height="0.8" fill="#444"/>
<rect x="104.5" y="213.5" width="10" height="10" fill="none" stroke="#222" stroke-width="0.9"/>
<rect x="102" y="217" width="15" height="0.8" fill="#444"/>
<rect x="104.5" y="230.5" width="10" height="8" fill="none" stroke="#222" stroke-width="0.9"/>
<rect x="102" y="234" width="15" height="0.8" fill="#444"/>
<rect x="119" y="198" width="5" height="9" fill="#000" stroke="none" stroke-width="1" />
<rect x="80" y="245.5" width="16" height="0.8" fill="#777"/>
<rect x="84" y="251" width="4" height="0.8" fill="#888"/>
<rect x="52" y="284.5" width="64" height="1.2" fill="#000"/>
<rect x="52" y="287.5" width="25" height="0.8" fill="#555"/>
<rect x="63.5" y="300.5" width="7" height="9" fill="none" stroke="#333" stroke-width="0.8"/>
<rect x="71.5" y="300.5" width="4" height="9" fill="none" stroke="#333" stroke-width="0.8"/>
<rect x="76.5" y="300.5" width="4" height="9" fill="none" stroke="#333" stroke-width="0.8"/>
<rect x="82.5" y="300.5" width="4" height="9" fill="none" stroke="#333" stroke-width="0.8"/>
<rect x="88.5" y="300.5" width="4" height="9" fill="none" stroke="#333" stroke-width="0.8"/>
<rect x="96.5" y="300.5" width="4" height="9" fill="none" stroke="#333" stroke-width="0.8"/>
<rect x="101.5" y="300.5" width="4" height="9" fill="none" stroke="#333" stroke-width="0.8"/>
<rect x="106.5" y="300.5" width="4" height="9" fill="none" stroke="#333" stroke-width="0.8"/>
<rect x="110.5" y="300.5" width="4" height="9" fill="none" stroke="#333" stroke-width="0.8"/>
<rect x="93" y="293" width="1" height="29" fill="#111"/>
<rect x="89" y="298" width="0.8" height="20" fill="#444"/>
<rect x="92.5" y="307.5" width="6" height="9" fill="none" stroke="#333" stroke-width="0.8"/>
<rect x="110.5" y="292.5" width="5" height="64" fill="none" stroke="#999" stroke-width="0.8" stroke-dasharray="2 1"/>
<rect x="83" y="323.5" width="32" height="1" fill="#111"/>
<rect x="113" y="323" width="1" height="25" fill="#111"/>
<rect x="53.5" y="326.5" width="8" height="7" fill="none" stroke="#333" stroke-width="0.8"/>
<rect x="67.5" y="326.5" width="8" height="7" fill="none" stroke="#333" stroke-width="0.8"/>
<rect x="78.5" y="326.5" width="8" height="7" fill="none" stroke="#333" stroke-width="0.8"/>
<rect x="57" y="334" width="1" height="24" fill="#111"/>
<rect x="71" y="334" width="1" height="24" fill="#111"/>
<rect x="82" y="334" width="1" height="24" fill="#111"/>
<rect x="86" y="334" width="1" height="24" fill="#111"/>
<rect x="82.5" y="343.5" width="21" height="16" fill="none" stroke="#111" stroke-width="1.2"/>
<rect x="57" y="346" width="26" height="1" fill="#111"/>
<rect x="57" y="350" width="26" height="1" fill="#111"/>
<rect x="57" y="355" width="26" height="1" fill="#111"/>
<rect x="57" y="358" width="26" height="1" fill="#111"/>
<rect x="84" y="351.5" width="19" height="1" fill="#222"/>
<rect x="104.5" y="346.5" width="6" height="3" fill="none" stroke="#444" stroke-width="0.7"/>
<rect x="104.5" y="354.5" width="6" height="3" fill="none" stroke="#444" stroke-width="0.7"/>
<path d="M52 364.0 H116" stroke="#333" stroke-width="1.3" stroke-dasharray="4 1 3 1 5 1 2 1"/>
<path d="M52 366.5 H108" stroke="#333" stroke-width="1.3" stroke-dasharray="4 1 3 1 5 1 2 1"/>
<path d="M52 369.0 H116" stroke="#333" stroke-width="1.3" stroke-dasharray="4 1 3 1 5 1 2 1"/>
<path d="M52 371.5 H116" stroke="#333" stroke-width="1.3" stroke-dasharray="4 1 3 1 5 1 2 1"/>
<path d="M52 374.0 H108" stroke="#333" stroke-width="1.3" stroke-dasharray="4 1 3 1 5 1 2 1"/>
<path d="M52 376.5 H116" stroke="#333" stroke-width="1.3" stroke-dasharray="4 1 3 1 5 1 2 1"/>
<rect x="83" y="382" width="5" height="0.8" fill="#888"/>
<rect x="55" y="415.5" width="64" height="1.2" fill="#000"/>
<rect x="93" y="414" width="26" height="1" fill="#666"/>
<rect x="75" y="461.5" width="23" height="1" fill="#333"/>
<rect x="118.5" y="460" width="5" height="9" fill="#000" stroke="none" stroke-width="1" />
<rect x="120" y="463" width="2" height="2" fill="#fff" stroke="none" stroke-width="1" />
<rect x="84" y="514.5" width="4" height="0.8" fill="#666"/>
<line x1="85" y1="644.5" x2="89" y2="644.5" stroke="#777" stroke-width="0.8" />
<defs><linearGradient id="gNav" x1="0" y1="0" x2="0" y2="1"><stop offset="0" stop-color="#c8dcf4"/><stop offset="1" stop-color="#5a8ad0"/></linearGradient></defs>
<rect x="160" y="109" width="1189" height="595" fill="#c8c8c8" stroke="none" stroke-width="1" />
<line x1="159" y1="109.5" x2="1365" y2="109.5" stroke="#8a8a8a" stroke-width="1" />
<rect x="750" y="115" width="1" height="589" fill="#a8a8a8" stroke="none" stroke-width="1" />
<rect x="219" y="114" width="531" height="590" fill="#8a8a8a" stroke="none" stroke-width="1" />
<rect x="749" y="115" width="1" height="589" fill="#606060" stroke="none" stroke-width="1" />
<rect x="220" y="115" width="529" height="589" fill="#ffffff" stroke="none" stroke-width="1" />
<rect x="1289" y="115" width="1" height="589" fill="#a8a8a8" stroke="none" stroke-width="1" />
<rect x="758" y="114" width="531" height="590" fill="#8a8a8a" stroke="none" stroke-width="1" />
<rect x="1288" y="115" width="1" height="589" fill="#606060" stroke="none" stroke-width="1" />
<rect x="759" y="115" width="529" height="589" fill="#ffffff" stroke="none" stroke-width="1" />
<rect x="1349" y="110" width="16" height="594" fill="#f0f0f0" stroke="none" stroke-width="1" />
<line x1="1349.5" y1="109" x2="1349.5" y2="703" stroke="#ffffff" stroke-width="1" />
<line x1="1349" y1="117.5" x2="1365" y2="117.5" stroke="#a0a0a0" stroke-width="1" />
<line x1="1349" y1="134.5" x2="1365" y2="134.5" stroke="#a0a0a0" stroke-width="1" />
<path d="M1354 121 l6 5 l-6 5 z" stroke="#000" fill="#000" stroke-width="1" />
<path d="M1353 148 l4 -4 l4 4" stroke="#606060" fill="none" stroke-width="1.6" />
<rect x="1350" y="215" width="15" height="17" fill="#cdcdcd" stroke="none" stroke-width="1" />
<path d="M1353 692 l4 4 l4 -4" stroke="#606060" fill="none" stroke-width="1.6" />
<line x1="0" y1="703.5" x2="1365" y2="703.5" stroke="#a0a0a0" stroke-width="1" />
<rect x="0" y="704" width="1365" height="24" fill="#f0f0f0" stroke="none" stroke-width="1" />
<rect x="11" y="707" width="16" height="13" fill="#222" stroke="#888" stroke-width="0.8" />
<rect x="15" y="709" width="8" height="9" fill="#b8c8e0" stroke="none" stroke-width="1" />
<rect x="14" y="721" width="10" height="2" fill="#888" stroke="none" stroke-width="1" />
<rect x="25" y="718" width="2" height="2" fill="#20c020" stroke="none" stroke-width="1" />
<rect x="44.5" y="708.5" width="13" height="15" fill="#f4f6fa" stroke="#6a7a9a" stroke-width="0.8" />
<line x1="44.5" y1="711.5" x2="57.5" y2="711.5" stroke="#6a7a9a" stroke-width="0.8" />
<rect x="48" y="716" width="6" height="2" fill="#3a4aa0" stroke="none" stroke-width="1" />
<line x1="540.5" y1="705" x2="540.5" y2="728" stroke="#a8a8a8" stroke-width="1" />
<line x1="751.5" y1="705" x2="751.5" y2="728" stroke="#a8a8a8" stroke-width="1" />
<line x1="824.5" y1="705" x2="824.5" y2="728" stroke="#a8a8a8" stroke-width="1" />
<path d="M553 709 h3 v16 h-3 z" stroke="none" fill="#3a6ab8" stroke-width="1" />
<path d="M568 709 l-10 8 l10 8 z" stroke="#3a6ab0" fill="url(#gNav)" stroke-width="0.8" shape-rendering="geometricPrecision"/>
<path d="M597 709 l-9 8 l9 8 z" stroke="#3a6ab0" fill="url(#gNav)" stroke-width="0.8" shape-rendering="geometricPrecision"/>
<rect x="609.5" y="705.5" width="74" height="20" fill="#ffffff" stroke="#707070" stroke-width="1" />
<text x="617.5" y="720" font-size="12" font-weight="normal" fill="#000" text-anchor="start" textLength="57.5" lengthAdjust="spacingAndGlyphs" >124 of 1014</text>
<path d="M694 709 l9 8 l-9 8 z" stroke="#3a6ab0" fill="url(#gNav)" stroke-width="0.8" shape-rendering="geometricPrecision"/>
<path d="M723 709 l10 8 l-10 8 z" stroke="#3a6ab0" fill="url(#gNav)" stroke-width="0.8" shape-rendering="geometricPrecision"/>
<path d="M735 709 h3 v16 h-3 z" stroke="none" fill="#3a6ab8" stroke-width="1" />
<circle cx="773" cy="716" r="8" fill="#4a9a30" stroke="#2a6a20" stroke-width="0.8"/>
<path d="M777 716 h-7 M772.5 712.5 l-3.5 3.5 l3.5 3.5" stroke="#ffffff" fill="none" stroke-width="2" />
<circle cx="805" cy="716" r="8" fill="#c8c8c8" stroke="#a8a8a8" stroke-width="0.8"/>
<path d="M801 716 h7 M805.5 712.5 l3.5 3.5 l-3.5 3.5" stroke="#ffffff" fill="none" stroke-width="2" />
<rect x="1243.5" y="709.5" width="14" height="15" fill="url(#gPage)" stroke="#5a8ad0" stroke-width="0.9" />
<rect x="1275.5" y="709.5" width="13" height="6" fill="url(#gPage)" stroke="#5a8ad0" stroke-width="0.9" />
<rect x="1275.5" y="717.5" width="13" height="7" fill="#c6daf2" stroke="#5a8ad0" stroke-width="0.9" />
<path d="M1275.5 715.5 h13 M1275.5 717.5 h13" stroke="#5a8ad0" fill="none" stroke-width="1" />
<rect x="1308.5" y="709.5" width="6" height="6" fill="url(#gPage)" stroke="#5a8ad0" stroke-width="0.8" />
<rect x="1308.5" y="717.5" width="6" height="7" fill="url(#gPage)" stroke="#5a8ad0" stroke-width="0.8" />
<rect x="1315.5" y="709.5" width="6" height="6" fill="url(#gPage)" stroke="#5a8ad0" stroke-width="0.8" />
<rect x="1315.5" y="717.5" width="6" height="7" fill="url(#gPage)" stroke="#5a8ad0" stroke-width="0.8" />
<rect x="1331" y="705" width="31" height="21" fill="#f8f8f8" stroke="none" stroke-width="1" />
<path d="M1331.5 726 V705.5 H1362" stroke="#8a8a8a" fill="none" stroke-width="1" />
<rect x="1339.5" y="710.5" width="7" height="14" fill="url(#gPage)" stroke="#5a8ad0" stroke-width="0.9" />
<rect x="1348.5" y="710.5" width="7" height="14" fill="url(#gPage)" stroke="#5a8ad0" stroke-width="0.9" />
<g id="d1" shape-rendering="auto">
<text x="250.5" y="147" font-size="10.6" font-weight="bold" fill="#111" text-anchor="start" textLength="183.4" lengthAdjust="spacingAndGlyphs" >21.  MECHATRO CONTROL SYSTEM</text>
<rect x="250" y="152" width="449.5" height="1.2" fill="#111"/>
<text x="250.5" y="170.2" font-size="10.6" font-weight="bold" fill="#111" text-anchor="start" textLength="230" lengthAdjust="spacingAndGlyphs" >21.1.3   POSITIVE CONTROL &amp; P-Q CONTROL</text>
<rect x="335.5" y="242.5" width="47.0" height="39.0" fill="#fff" stroke="#7a7a7a" style="stroke-width:calc(var(--k) * 1.3px)"/>
<rect x="347.5" y="281.5" width="35.0" height="10.0" fill="#fff" stroke="#7a7a7a" style="stroke-width:calc(var(--k) * 1.3px)"/>
<text x="341.8" y="256" font-size="7.6" font-weight="normal" fill="#000" text-anchor="start" textLength="13.1" lengthAdjust="spacingAndGlyphs" stroke="#000" style="stroke-width:calc(var(--k) * 0.25px)">NSB</text>
<text x="341.8" y="264" font-size="7.6" font-weight="normal" fill="#000" text-anchor="start" textLength="34.2" lengthAdjust="spacingAndGlyphs" stroke="#000" style="stroke-width:calc(var(--k) * 0.25px)">SELECTOR</text>
<text x="341.8" y="272" font-size="7.6" font-weight="normal" fill="#000" text-anchor="start" textLength="20.2" lengthAdjust="spacingAndGlyphs" stroke="#000" style="stroke-width:calc(var(--k) * 0.25px)">VALVE</text>
<text x="351.1" y="288.2" font-size="6.6" font-weight="normal" fill="#000" text-anchor="start" textLength="28.7" lengthAdjust="spacingAndGlyphs" stroke="#000" style="stroke-width:calc(var(--k) * 0.25px)">SOLENOID</text>
<rect x="390.5" y="227.5" width="19.0" height="68.0" fill="#fff" stroke="#7a7a7a" style="stroke-width:calc(var(--k) * 1.3px)"/>
<text x="0" y="0" font-size="8.2" fill="#000" stroke="#000" style="stroke-width:calc(var(--k) * 0.25px)" textLength="23.4" lengthAdjust="spacingAndGlyphs" transform="translate(402.2 288) rotate(-90)">OPTION</text>
<rect x="416.5" y="227.5" width="18.0" height="68.0" fill="#fff" stroke="#7a7a7a" style="stroke-width:calc(var(--k) * 1.3px)"/>
<text x="0" y="0" font-size="8.2" fill="#000" stroke="#000" style="stroke-width:calc(var(--k) * 0.25px)" textLength="42.8" lengthAdjust="spacingAndGlyphs" transform="translate(427.3 288) rotate(-90)">ARM  1SPEED</text>
<rect x="441.5" y="227.5" width="19.0" height="68.0" fill="#fff" stroke="#7a7a7a" style="stroke-width:calc(var(--k) * 1.3px)"/>
<text x="0" y="0" font-size="8.2" fill="#000" stroke="#000" style="stroke-width:calc(var(--k) * 0.25px)" textLength="21" lengthAdjust="spacingAndGlyphs" transform="translate(453 288) rotate(-90)">SWING</text>
<rect x="466.5" y="195.5" width="19.0" height="62.0" fill="#fff" stroke="#7a7a7a" style="stroke-width:calc(var(--k) * 1.3px)"/>
<text x="0" y="0" font-size="8.2" fill="#000" stroke="#000" style="stroke-width:calc(var(--k) * 0.25px)" textLength="56.3" lengthAdjust="spacingAndGlyphs" transform="translate(478.4 253.1) rotate(-90)">BOOM UP CONFLUX</text>
<rect x="466.5" y="264.5" width="19.0" height="62.0" fill="#fff" stroke="#7a7a7a" style="stroke-width:calc(var(--k) * 1.3px)"/>
<text x="0" y="0" font-size="8.2" fill="#000" stroke="#000" style="stroke-width:calc(var(--k) * 0.25px)" textLength="35.7" lengthAdjust="spacingAndGlyphs" transform="translate(478.5 318.5) rotate(-90)">P2 UNLOAD</text>
<rect x="508.5" y="228.5" width="18.0" height="68.0" fill="#fff" stroke="#7a7a7a" style="stroke-width:calc(var(--k) * 1.3px)"/>
<text x="0" y="0" font-size="8.2" fill="#000" stroke="#000" style="stroke-width:calc(var(--k) * 0.25px)" textLength="40.8" lengthAdjust="spacingAndGlyphs" transform="translate(519.7 286.7) rotate(-90)">TRAVEL LEFT</text>
<rect x="549.5" y="195.5" width="19.0" height="63.0" fill="#fff" stroke="#7a7a7a" style="stroke-width:calc(var(--k) * 1.3px)"/>
<text x="0" y="0" font-size="8.2" fill="#000" stroke="#000" style="stroke-width:calc(var(--k) * 0.25px)" textLength="36" lengthAdjust="spacingAndGlyphs" transform="translate(561.5 250.1) rotate(-90)">P1 UNLOAD</text>
<rect x="598.5" y="227.5" width="19.0" height="68.0" fill="#fff" stroke="#7a7a7a" style="stroke-width:calc(var(--k) * 1.3px)"/>
<text x="0" y="0" font-size="8.2" fill="#000" stroke="#000" style="stroke-width:calc(var(--k) * 0.25px)" textLength="45.3" lengthAdjust="spacingAndGlyphs" transform="translate(611 287.9) rotate(-90)">TRAVEL RIGHT</text>
<rect x="624.5" y="227.5" width="18.0" height="68.0" fill="#fff" stroke="#7a7a7a" style="stroke-width:calc(var(--k) * 1.3px)"/>
<text x="0" y="0" font-size="8.2" fill="#000" stroke="#000" style="stroke-width:calc(var(--k) * 0.25px)" textLength="20" lengthAdjust="spacingAndGlyphs" transform="translate(635.5 287.9) rotate(-90)">BOOM</text>
<rect x="649.5" y="227.5" width="19.0" height="68.0" fill="#fff" stroke="#7a7a7a" style="stroke-width:calc(var(--k) * 1.3px)"/>
<text x="0" y="0" font-size="8.2" fill="#000" stroke="#000" style="stroke-width:calc(var(--k) * 0.25px)" textLength="25.4" lengthAdjust="spacingAndGlyphs" transform="translate(660.5 287.9) rotate(-90)">BUCKET</text>
<rect x="675.5" y="227.5" width="18.0" height="68.0" fill="#fff" stroke="#7a7a7a" style="stroke-width:calc(var(--k) * 1.3px)"/>
<text x="0" y="0" font-size="8.2" fill="#000" stroke="#000" style="stroke-width:calc(var(--k) * 0.25px)" textLength="42.8" lengthAdjust="spacingAndGlyphs" transform="translate(687 287.9) rotate(-90)">ARM  2 SPEED</text>
<rect x="548.5" y="264.5" width="38.0" height="57.0" fill="#fff" stroke="#7a7a7a" style="stroke-width:calc(var(--k) * 1.3px)"/>
<text x="0" y="0" font-size="8.2" fill="#000" stroke="#000" style="stroke-width:calc(var(--k) * 0.25px)" textLength="23.6" lengthAdjust="spacingAndGlyphs" transform="translate(565.3 309.6) rotate(-90)">TRAVEL</text>
<text x="0" y="0" font-size="8.2" fill="#000" stroke="#000" style="stroke-width:calc(var(--k) * 0.25px)" textLength="30.4" lengthAdjust="spacingAndGlyphs" transform="translate(573.5 309.6) rotate(-90)">STRAIGHT</text>
<path d="M382.6 261.3 H385.5 L386.5 259.8 V261.3 H390.4" fill="none" stroke="#1a1a1a" style="stroke-width:calc(var(--k) * 1.1px)" />
<path d="M 409.5 261.5 H 416.5 M 434.5 261.5 H 441.5 M 460.5 261.5 H 508.5" fill="none" stroke="#1a1a1a" style="stroke-width:calc(var(--k) * 1.25px)" />
<path d="M 485.5 230.5 H 496.5 V 261.5" fill="none" stroke="#1a1a1a" style="stroke-width:calc(var(--k) * 1.25px)" />
<circle cx="496.5" cy="261.5" r="3.1" fill="#111"/>
<path d="M 526.5 261.5 H 533.5 V 294.5 H 548.5" fill="none" stroke="#1a1a1a" style="stroke-width:calc(var(--k) * 1.25px)" />
<path d="M 549.5 230.5 H 540.5 V 338.5 H 579.5" fill="none" stroke="#1a1a1a" style="stroke-width:calc(var(--k) * 1.25px)" />
<path d="M 586.5 292.5 H 592.5 V 261.5 H 598.5" fill="none" stroke="#1a1a1a" style="stroke-width:calc(var(--k) * 1.25px)" />
<path d="M 617.5 261.5 H 624.5 M 642.5 261.5 H 649.5 M 668.5 261.5 H 675.5" fill="none" stroke="#1a1a1a" style="stroke-width:calc(var(--k) * 1.25px)" />
<path d="M 485.5 293.5 H 498.5 V 345.5 H 555.5" fill="none" stroke="#1a1a1a" style="stroke-width:calc(var(--k) * 1.25px)" />
<text x="559" y="327.2" font-size="5.6" font-weight="normal" fill="#000" text-anchor="start" textLength="6" lengthAdjust="spacingAndGlyphs" stroke="#000" style="stroke-width:calc(var(--k) * 0.25px)">P2</text>
<text x="582.8" y="327.2" font-size="5.6" font-weight="normal" fill="#000" text-anchor="start" textLength="5.4" lengthAdjust="spacingAndGlyphs" stroke="#000" style="stroke-width:calc(var(--k) * 0.25px)">P1</text>
<path d="M 555.5 321.5 V 362.5 M 579.5 321.5 V 362.5" fill="none" stroke="#1a1a1a" style="stroke-width:calc(var(--k) * 1.25px)" />
<circle cx="579.5" cy="338.5" r="3.1" fill="#111"/>
<circle cx="555.5" cy="345.5" r="3.1" fill="#111"/>
<circle cx="555.5" cy="354.5" r="3.1" fill="#111"/>
<circle cx="579.5" cy="354.5" r="3.1" fill="#111"/>
<path d="M 438.5 597.5 V 354.5 H 535.5 M 545.5 354.5 H 555.5" fill="none" stroke="#1a1a1a" style="stroke-width:calc(var(--k) * 1.25px)" />
<path d="M535.5 354.5 L540.7 349.3 L545.9000000000001 354.5 L540.7 359.7 Z" fill="#fff" stroke="#333" style="stroke-width:calc(var(--k) * 1.1px)"/>
<path d="M537.9000000000001 354.5 L540.7 351.7 L543.5 354.5 L540.7 357.3 Z" fill="#fff" stroke="#444" style="stroke-width:calc(var(--k) * 0.9px)"/>
<path d="M 579.5 354.5 H 589.5 M 599.5 354.5 H 677.5" fill="none" stroke="#1a1a1a" style="stroke-width:calc(var(--k) * 1.25px)" />
<path d="M589.0 354.4 L594.2 349.2 L599.4000000000001 354.4 L594.2 359.59999999999997 Z" fill="#fff" stroke="#333" style="stroke-width:calc(var(--k) * 1.1px)"/>
<path d="M591.4000000000001 354.4 L594.2 351.59999999999997 L597.0 354.4 L594.2 357.2 Z" fill="#fff" stroke="#444" style="stroke-width:calc(var(--k) * 0.9px)"/>
<path d="M 677.5 354.5 V 408.5 H 420.5" fill="none" stroke="#1a1a1a" style="stroke-width:calc(var(--k) * 1.25px)" stroke-dasharray="4 2"/>
<text x="531" y="366" font-size="5.6" font-weight="normal" fill="#000" text-anchor="start" textLength="14" lengthAdjust="spacingAndGlyphs" stroke="#000" style="stroke-width:calc(var(--k) * 0.25px)">SE-23</text>
<text x="591.7" y="366" font-size="5.6" font-weight="normal" fill="#000" text-anchor="start" textLength="14.3" lengthAdjust="spacingAndGlyphs" stroke="#000" style="stroke-width:calc(var(--k) * 0.25px)">SE-22</text>
<circle cx="554.7" cy="369.3" r="7" fill="none" stroke="#222" style="stroke-width:calc(var(--k) * 1.1px)"/>
<path d="M546.7 378 L563.2 361.5" fill="none" stroke="#1a1a1a" style="stroke-width:calc(var(--k) * 1.2px)" />
<path d="M564.7 360 L557.2 363 L561.7 367.5 Z" fill="#111"/>
<path d="M555.5 377 L551.4000000000001 383.5 L559.6 383.5 Z" fill="#111"/>
<path d="M555.5 362.3 L552.3000000000001 366.6 L558.7 366.6 Z" fill="#111"/>
<circle cx="578.6" cy="369.3" r="7" fill="none" stroke="#222" style="stroke-width:calc(var(--k) * 1.1px)"/>
<path d="M570.6 378 L587.1 361.5" fill="none" stroke="#1a1a1a" style="stroke-width:calc(var(--k) * 1.2px)" />
<path d="M588.6 360 L581.1 363 L585.6 367.5 Z" fill="#111"/>
<path d="M579.4 377 L575.3000000000001 383.5 L583.5 383.5 Z" fill="#111"/>
<path d="M579.4 362.3 L576.2 366.6 L582.6 366.6 Z" fill="#111"/>
<path d="M 555.5 383.5 V 499.5 H 664.5 V 532.5" fill="none" stroke="#1a1a1a" style="stroke-width:calc(var(--k) * 1.25px)" />
<path d="M 579.5 383.5 V 486.5 H 695.5 V 660.5 H 691.5" fill="none" stroke="#1a1a1a" style="stroke-width:calc(var(--k) * 1.25px)" />
<text x="307" y="305.2" font-size="7.6" font-weight="normal" fill="#000" text-anchor="start" textLength="32" lengthAdjust="spacingAndGlyphs" stroke="#000" style="stroke-width:calc(var(--k) * 0.25px)">OPTIONAL</text>
<text x="307" y="314.2" font-size="7.6" font-weight="normal" fill="#000" text-anchor="start" textLength="40" lengthAdjust="spacingAndGlyphs" stroke="#000" style="stroke-width:calc(var(--k) * 0.25px)">PILOT VALVE</text>
<path d="M310.4 316.4 L327 321.4 L343.6 316.4" fill="none" stroke="#1a1a1a" style="stroke-width:calc(var(--k) * 1.1px)" />
<rect x="306.5" y="321.5" width="41.0" height="22.0" fill="#fff" stroke="#7a7a7a" style="stroke-width:calc(var(--k) * 1.3px)"/>
<path d="M 312.5 343.5 V 356.5 H 321.5 M 333.5 356.5 H 344.5 V 343.5" fill="none" stroke="#1a1a1a" style="stroke-width:calc(var(--k) * 1.25px)" />
<path d="M320.6 356.2 L327 351.59999999999997 L333.4 356.2 L327 360.8 Z" fill="#fff" stroke="#222" style="stroke-width:calc(var(--k) * 1.3px)"/>
<ellipse cx="327" cy="356.2" rx="2.6" ry="2.2" fill="#fff" stroke="#666" style="stroke-width:calc(var(--k) * 0.9px)"/>
<path d="M 327.5 362.5 V 384.5 M 327.5 393.5 V 656.5 H 452.5" fill="none" stroke="#1a1a1a" style="stroke-width:calc(var(--k) * 1.25px)" />
<text x="309.6" y="383.2" font-size="5.6" font-weight="normal" fill="#000" text-anchor="start" textLength="14.4" lengthAdjust="spacingAndGlyphs" stroke="#000" style="stroke-width:calc(var(--k) * 0.25px)">SE-11</text>
<circle cx="327" cy="389" r="4.6" fill="#fff" stroke="#111" style="stroke-width:calc(var(--k) * 1.3px)"/>
<circle cx="327" cy="389" r="2.4999999999999996" fill="#fff" stroke="#333" style="stroke-width:calc(var(--k) * 1px)"/>
<circle cx="327.5" cy="536.5" r="3.1" fill="#111"/>
<path d="M 327.5 536.5 H 452.5" fill="none" stroke="#1a1a1a" style="stroke-width:calc(var(--k) * 1.25px)" />
<text x="261" y="403.8" font-size="7.6" font-weight="normal" fill="#000" text-anchor="start" textLength="19.7" lengthAdjust="spacingAndGlyphs" stroke="#000" style="stroke-width:calc(var(--k) * 0.25px)">(LEFT)</text>
<text x="291.8" y="403.8" font-size="7.6" font-weight="normal" fill="#000" text-anchor="start" textLength="24.2" lengthAdjust="spacingAndGlyphs" stroke="#000" style="stroke-width:calc(var(--k) * 0.25px)">(RIGHT)</text>
<path d="M256 406.4 L270.4 417 L285 406.4 M288 406.4 L303 417 L317.9 406.4" fill="none" stroke="#1a1a1a" style="stroke-width:calc(var(--k) * 1.1px)" />
<rect x="253.5" y="417.5" width="68.0" height="22.0" fill="#fff" stroke="#7a7a7a" style="stroke-width:calc(var(--k) * 1.3px)"/>
<text x="268.8" y="427.2" font-size="7.8" font-weight="normal" fill="#000" text-anchor="start" textLength="40.2" lengthAdjust="spacingAndGlyphs" stroke="#000" style="stroke-width:calc(var(--k) * 0.25px)">PILOT VALVE</text>
<text x="268.8" y="436.2" font-size="7.8" font-weight="normal" fill="#000" text-anchor="start" textLength="40.2" lengthAdjust="spacingAndGlyphs" stroke="#000" style="stroke-width:calc(var(--k) * 0.25px)">FOR TRAVEL</text>
<path d="M 257.5 439.5 V 451.5 H 264.5 M 276.5 451.5 H 283.5 V 439.5" fill="none" stroke="#1a1a1a" style="stroke-width:calc(var(--k) * 1.25px)" />
<path d="M 289.5 439.5 V 451.5 H 296.5 M 308.5 451.5 H 315.5 V 439.5" fill="none" stroke="#1a1a1a" style="stroke-width:calc(var(--k) * 1.25px)" />
<path d="M264.0 451.4 L270.4 446.79999999999995 L276.79999999999995 451.4 L270.4 456.0 Z" fill="#fff" stroke="#222" style="stroke-width:calc(var(--k) * 1.3px)"/>
<ellipse cx="270.4" cy="451.4" rx="2.6" ry="2.2" fill="#fff" stroke="#666" style="stroke-width:calc(var(--k) * 0.9px)"/>
<path d="M296.1 451.4 L302.5 446.79999999999995 L308.9 451.4 L302.5 456.0 Z" fill="#fff" stroke="#222" style="stroke-width:calc(var(--k) * 1.3px)"/>
<ellipse cx="302.5" cy="451.4" rx="2.6" ry="2.2" fill="#fff" stroke="#666" style="stroke-width:calc(var(--k) * 0.9px)"/>
<path d="M 270.5 457.5 V 494.5 M 270.5 503.5 V 526.5 H 452.5" fill="none" stroke="#1a1a1a" style="stroke-width:calc(var(--k) * 1.25px)" />
<path d="M 302.5 457.5 V 494.5 M 302.5 503.5 V 649.5 H 452.5" fill="none" stroke="#1a1a1a" style="stroke-width:calc(var(--k) * 1.25px)" />
<text x="253" y="495.5" font-size="5.6" font-weight="normal" fill="#000" text-anchor="start" textLength="14.5" lengthAdjust="spacingAndGlyphs" stroke="#000" style="stroke-width:calc(var(--k) * 0.25px)">SE-10</text>
<text x="288" y="495.5" font-size="5.6" font-weight="normal" fill="#000" text-anchor="start" textLength="12" lengthAdjust="spacingAndGlyphs" stroke="#000" style="stroke-width:calc(var(--k) * 0.25px)">SE-9</text>
<circle cx="270.4" cy="499.3" r="4.6" fill="#fff" stroke="#111" style="stroke-width:calc(var(--k) * 1.3px)"/>
<circle cx="270.4" cy="499.3" r="2.4999999999999996" fill="#fff" stroke="#333" style="stroke-width:calc(var(--k) * 1px)"/>
<circle cx="302.6" cy="499.3" r="4.6" fill="#fff" stroke="#111" style="stroke-width:calc(var(--k) * 1.3px)"/>
<circle cx="302.6" cy="499.3" r="2.4999999999999996" fill="#fff" stroke="#333" style="stroke-width:calc(var(--k) * 1px)"/>
<circle cx="342.3" cy="402" r="4.5" fill="#fff" stroke="#333" style="stroke-width:calc(var(--k) * 0.9px)"/>
<text x="349.6" y="401.6" font-size="7.6" font-weight="normal" fill="#000" text-anchor="start" textLength="17.9" lengthAdjust="spacingAndGlyphs" stroke="#000" style="stroke-width:calc(var(--k) * 0.25px)">PILOT</text>
<text x="349.6" y="409.8" font-size="7.6" font-weight="normal" fill="#000" text-anchor="start" textLength="20.6" lengthAdjust="spacingAndGlyphs" stroke="#000" style="stroke-width:calc(var(--k) * 0.25px)">VALVE</text>
<path d="M 342.5 406.5 V 423.5" fill="none" stroke="#1a1a1a" style="stroke-width:calc(var(--k) * 1.25px)" />
<rect x="332.5" y="423.5" width="20.0" height="25.0" fill="#fff" stroke="#7a7a7a" style="stroke-width:calc(var(--k) * 1.3px)"/>
<path d="M 342.5 448.5 V 498.5" fill="none" stroke="#1a1a1a" style="stroke-width:calc(var(--k) * 1.25px)" />
<text x="344" y="478" font-size="7.6" font-weight="normal" fill="#000" text-anchor="start" textLength="14.2" lengthAdjust="spacingAndGlyphs" stroke="#000" style="stroke-width:calc(var(--k) * 0.25px)">LOW</text>
<text x="344" y="487" font-size="7.6" font-weight="normal" fill="#000" text-anchor="start" textLength="34.6" lengthAdjust="spacingAndGlyphs" stroke="#000" style="stroke-width:calc(var(--k) * 0.25px)">PRESSURE</text>
<text x="344" y="495.2" font-size="7.6" font-weight="normal" fill="#000" text-anchor="start" textLength="27" lengthAdjust="spacingAndGlyphs" stroke="#000" style="stroke-width:calc(var(--k) * 0.25px)">SENSOR</text>
<circle cx="342.3" cy="502.9" r="4.6" fill="#fff" stroke="#111" style="stroke-width:calc(var(--k) * 1.3px)"/>
<circle cx="342.3" cy="502.9" r="2.4999999999999996" fill="#fff" stroke="#333" style="stroke-width:calc(var(--k) * 1px)"/>
<text x="347" y="501.4" font-size="5.4" font-weight="normal" fill="#000" text-anchor="start" textLength="16" lengthAdjust="spacingAndGlyphs" stroke="#000" style="stroke-width:calc(var(--k) * 0.25px)">SE-1~4</text>
<circle cx="380.9" cy="402" r="4.5" fill="#fff" stroke="#333" style="stroke-width:calc(var(--k) * 0.9px)"/>
<text x="388.9" y="401.6" font-size="7.6" font-weight="normal" fill="#000" text-anchor="start" textLength="17.5" lengthAdjust="spacingAndGlyphs" stroke="#000" style="stroke-width:calc(var(--k) * 0.25px)">PILOT</text>
<text x="388.9" y="409.8" font-size="7.6" font-weight="normal" fill="#000" text-anchor="start" textLength="19.7" lengthAdjust="spacingAndGlyphs" stroke="#000" style="stroke-width:calc(var(--k) * 0.25px)">VALVE</text>
<path d="M 380.5 406.5 V 424.5" fill="none" stroke="#1a1a1a" style="stroke-width:calc(var(--k) * 1.25px)" />
<rect x="370.5" y="424.5" width="21.0" height="25.0" fill="#fff" stroke="#7a7a7a" style="stroke-width:calc(var(--k) * 1.3px)"/>
<path d="M 380.5 449.5 V 499.5" fill="none" stroke="#1a1a1a" style="stroke-width:calc(var(--k) * 1.25px)" />
<text x="382.7" y="478" font-size="7.6" font-weight="normal" fill="#000" text-anchor="start" textLength="15.2" lengthAdjust="spacingAndGlyphs" stroke="#000" style="stroke-width:calc(var(--k) * 0.25px)">LOW</text>
<text x="382.7" y="487" font-size="7.6" font-weight="normal" fill="#000" text-anchor="start" textLength="35.2" lengthAdjust="spacingAndGlyphs" stroke="#000" style="stroke-width:calc(var(--k) * 0.25px)">PRESSURE</text>
<text x="382.7" y="495.2" font-size="7.6" font-weight="normal" fill="#000" text-anchor="start" textLength="27.3" lengthAdjust="spacingAndGlyphs" stroke="#000" style="stroke-width:calc(var(--k) * 0.25px)">SENSOR</text>
<circle cx="380.9" cy="503.75" r="4.6" fill="#fff" stroke="#111" style="stroke-width:calc(var(--k) * 1.3px)"/>
<circle cx="380.9" cy="503.75" r="2.4999999999999996" fill="#fff" stroke="#333" style="stroke-width:calc(var(--k) * 1px)"/>
<text x="386" y="502.25" font-size="5.4" font-weight="normal" fill="#000" text-anchor="start" textLength="20" lengthAdjust="spacingAndGlyphs" stroke="#000" style="stroke-width:calc(var(--k) * 0.25px)">SE-5,7,8</text>
<path d="M 342.5 507.5 V 667.5 H 452.5" fill="none" stroke="#1a1a1a" style="stroke-width:calc(var(--k) * 1.25px)" />
<circle cx="342.5" cy="547.5" r="3.1" fill="#111"/>
<path d="M 342.5 547.5 H 452.5" fill="none" stroke="#1a1a1a" style="stroke-width:calc(var(--k) * 1.25px)" />
<path d="M 380.5 508.5 V 675.5 H 452.5" fill="none" stroke="#1a1a1a" style="stroke-width:calc(var(--k) * 1.25px)" />
<circle cx="380.5" cy="555.5" r="3.1" fill="#111"/>
<path d="M 380.5 555.5 H 452.5" fill="none" stroke="#1a1a1a" style="stroke-width:calc(var(--k) * 1.25px)" />
<path d="M 420.5 408.5 V 609.5 H 453.5" fill="none" stroke="#1a1a1a" style="stroke-width:calc(var(--k) * 1.25px)" />
<path d="M 375.5 514.5 H 631.5 V 700.5 H 375.5 Z" fill="none" stroke="#1a1a1a" style="stroke-width:calc(var(--k) * 1px)" stroke-dasharray="6 2 1.5 2"/>
<rect x="452.5" y="516.5" width="62.0" height="44.0" fill="#fff" stroke="#7a7a7a" style="stroke-width:calc(var(--k) * 1.3px)"/>
<path d="M 459.5 525.5 V 554.5 H 508.5" fill="none" stroke="#1a1a1a" style="stroke-width:calc(var(--k) * 1.25px)" />
<path d="M459.3 549.6 H468.7 L497.1 529.2 H506.2" fill="none" stroke="#333" style="stroke-width:calc(var(--k) * 1.1px)" />
<rect x="453.5" y="581.5" width="61.0" height="44.0" fill="#fff" stroke="#7a7a7a" style="stroke-width:calc(var(--k) * 1.3px)"/>
<path d="M 460.5 590.5 V 618.5 H 508.5" fill="none" stroke="#1a1a1a" style="stroke-width:calc(var(--k) * 1.25px)" />
<path d="M460.4 595 H477.9 C483 601 488 608 496 611.5 C499 612.8 502 613.2 504.4 613.6" fill="none" stroke="#333" style="stroke-width:calc(var(--k) * 1.1px)" />
<rect x="452.5" y="638.5" width="62.0" height="44.0" fill="#fff" stroke="#7a7a7a" style="stroke-width:calc(var(--k) * 1.3px)"/>
<path d="M 459.5 647.5 V 675.5 H 508.5" fill="none" stroke="#1a1a1a" style="stroke-width:calc(var(--k) * 1.25px)" />
<path d="M459.3 671.1 H468.6 L497 651 H505.7" fill="none" stroke="#333" style="stroke-width:calc(var(--k) * 1.1px)" />
<text x="443.5" y="523.6" font-size="7" font-weight="normal" fill="#000" text-anchor="start" stroke="#000" style="stroke-width:calc(var(--k) * 0.25px)">pi</text>
<path d="M444.4 535.5 V526.4 M440.9 532.4 L444.4 526.4 L447.9 532.4" fill="none" stroke="#1a1a1a" style="stroke-width:calc(var(--k) * 1px)" />
<text x="444" y="596.5" font-size="7" font-weight="normal" fill="#000" text-anchor="start" stroke="#000" style="stroke-width:calc(var(--k) * 0.25px)">pi</text>
<path d="M 438.5 597.5 H 453.5" fill="none" stroke="#1a1a1a" style="stroke-width:calc(var(--k) * 1.25px)" />
<path d="M447.5 609.9 V600.8 M444.0 606.8 L447.5 600.8 L451.0 606.8" fill="none" stroke="#1a1a1a" style="stroke-width:calc(var(--k) * 1px)" />
<text x="444" y="640.5" font-size="7" font-weight="normal" fill="#000" text-anchor="start" stroke="#000" style="stroke-width:calc(var(--k) * 0.25px)">pi</text>
<path d="M447.5 652.6 V644.2 M444.0 650.2 L447.5 644.2 L451.0 650.2" fill="none" stroke="#1a1a1a" style="stroke-width:calc(var(--k) * 1px)" />
<text x="515.5" y="532.2" font-size="7.8" font-weight="normal" fill="#000" text-anchor="start" textLength="43.8" lengthAdjust="spacingAndGlyphs" stroke="#000" style="stroke-width:calc(var(--k) * 0.25px)">PILOT SIGNAL</text>
<text x="515.5" y="540.5" font-size="7.8" font-weight="normal" fill="#000" text-anchor="start" textLength="31.5" lengthAdjust="spacingAndGlyphs" stroke="#000" style="stroke-width:calc(var(--k) * 0.25px)">PROCESS</text>
<text x="448.8" y="570.2" font-size="7.8" font-weight="normal" fill="#000" text-anchor="start" textLength="96.9" lengthAdjust="spacingAndGlyphs" stroke="#000" style="stroke-width:calc(var(--k) * 0.25px)">PILOT SECONDARY PRESSURE</text>
<text x="516" y="669.2" font-size="7.8" font-weight="normal" fill="#000" text-anchor="start" textLength="43.3" lengthAdjust="spacingAndGlyphs" stroke="#000" style="stroke-width:calc(var(--k) * 0.25px)">PILOT SIGNAL</text>
<text x="516" y="677.4" font-size="7.8" font-weight="normal" fill="#000" text-anchor="start" textLength="31" lengthAdjust="spacingAndGlyphs" stroke="#000" style="stroke-width:calc(var(--k) * 0.25px)">PROCESS</text>
<text x="448.8" y="691.2" font-size="7.8" font-weight="normal" fill="#000" text-anchor="start" textLength="97.4" lengthAdjust="spacingAndGlyphs" stroke="#000" style="stroke-width:calc(var(--k) * 0.25px)">PILOT SECONDARY PRESSURE</text>
<path d="M 514.5 542.5 H 569.5" fill="none" stroke="#1a1a1a" style="stroke-width:calc(var(--k) * 1.25px)" />
<path d="M 514.5 595.5 H 551.5 V 549.5 H 569.5" fill="none" stroke="#1a1a1a" style="stroke-width:calc(var(--k) * 1.25px)" />
<path d="M 514.5 615.5 H 551.5 V 654.5 H 570.5" fill="none" stroke="#1a1a1a" style="stroke-width:calc(var(--k) * 1.25px)" />
<path d="M 514.5 661.5 H 570.5" fill="none" stroke="#1a1a1a" style="stroke-width:calc(var(--k) * 1.25px)" />
<rect x="569.5" y="532.5" width="51.0" height="21.0" fill="#fff" stroke="#7a7a7a" style="stroke-width:calc(var(--k) * 1.3px)"/>
<text x="570.6" y="538.6" font-size="6.4" font-weight="normal" fill="#000" text-anchor="start" textLength="24.3" lengthAdjust="spacingAndGlyphs" stroke="#000" style="stroke-width:calc(var(--k) * 0.25px)">P2 PUMP</text>
<text x="570.6" y="544.8" font-size="6.4" font-weight="normal" fill="#000" text-anchor="start" textLength="43.6" lengthAdjust="spacingAndGlyphs" stroke="#000" style="stroke-width:calc(var(--k) * 0.25px)">PROPORTIONAL</text>
<text x="570.6" y="551" font-size="6.4" font-weight="normal" fill="#000" text-anchor="start" textLength="48.4" lengthAdjust="spacingAndGlyphs" stroke="#000" style="stroke-width:calc(var(--k) * 0.25px)">VALVE COMMAND</text>
<rect x="637.5" y="532.5" width="52.0" height="21.0" fill="#fff" stroke="#7a7a7a" style="stroke-width:calc(var(--k) * 1.3px)"/>
<text x="640.6" y="538.6" font-size="6.4" font-weight="normal" fill="#000" text-anchor="start" textLength="24.7" lengthAdjust="spacingAndGlyphs" stroke="#000" style="stroke-width:calc(var(--k) * 0.25px)">P2 PUMP</text>
<text x="640.6" y="544.8" font-size="6.4" font-weight="normal" fill="#000" text-anchor="start" textLength="44.3" lengthAdjust="spacingAndGlyphs" stroke="#000" style="stroke-width:calc(var(--k) * 0.25px)">PROPORTIONAL</text>
<text x="640.6" y="551" font-size="6.4" font-weight="normal" fill="#000" text-anchor="start" textLength="41.2" lengthAdjust="spacingAndGlyphs" stroke="#000" style="stroke-width:calc(var(--k) * 0.25px)">VALVE  PSV-P2</text>
<path d="M 620.5 542.5 H 637.5" fill="none" stroke="#1a1a1a" style="stroke-width:calc(var(--k) * 1.25px)" />
<rect x="570.5" y="651.5" width="51.0" height="20.0" fill="#fff" stroke="#7a7a7a" style="stroke-width:calc(var(--k) * 1.3px)"/>
<text x="570.8" y="657.7" font-size="6.4" font-weight="normal" fill="#000" text-anchor="start" textLength="24.5" lengthAdjust="spacingAndGlyphs" stroke="#000" style="stroke-width:calc(var(--k) * 0.25px)">P1 PUMP</text>
<text x="570.8" y="663.7" font-size="6.4" font-weight="normal" fill="#000" text-anchor="start" textLength="44.5" lengthAdjust="spacingAndGlyphs" stroke="#000" style="stroke-width:calc(var(--k) * 0.25px)">PROPORTIONAL</text>
<text x="570.8" y="669.8" font-size="6.4" font-weight="normal" fill="#000" text-anchor="start" textLength="49.4" lengthAdjust="spacingAndGlyphs" stroke="#000" style="stroke-width:calc(var(--k) * 0.25px)">VALVE COMMAND</text>
<rect x="640.5" y="651.5" width="51.0" height="20.0" fill="#fff" stroke="#7a7a7a" style="stroke-width:calc(var(--k) * 1.3px)"/>
<text x="642.4" y="657.7" font-size="6.4" font-weight="normal" fill="#000" text-anchor="start" textLength="25.1" lengthAdjust="spacingAndGlyphs" stroke="#000" style="stroke-width:calc(var(--k) * 0.25px)">P1 PUMP</text>
<text x="642.4" y="663.7" font-size="6.4" font-weight="normal" fill="#000" text-anchor="start" textLength="44.8" lengthAdjust="spacingAndGlyphs" stroke="#000" style="stroke-width:calc(var(--k) * 0.25px)">PROPORTIONAL</text>
<text x="642.4" y="669.8" font-size="6.4" font-weight="normal" fill="#000" text-anchor="start" textLength="42" lengthAdjust="spacingAndGlyphs" stroke="#000" style="stroke-width:calc(var(--k) * 0.25px)">VALVE  PSV-P1</text>
<path d="M 621.5 660.5 H 640.5" fill="none" stroke="#1a1a1a" style="stroke-width:calc(var(--k) * 1.25px)" />
<text x="584.7" y="690" font-size="7.8" font-weight="normal" fill="#000" text-anchor="start" textLength="36" lengthAdjust="spacingAndGlyphs" stroke="#000" style="stroke-width:calc(var(--k) * 0.25px)">MECHATRO</text>
<text x="584.4" y="697.8" font-size="7.8" font-weight="normal" fill="#000" text-anchor="start" textLength="43.4" lengthAdjust="spacingAndGlyphs" stroke="#000" style="stroke-width:calc(var(--k) * 0.25px)">CONTROLLER</text>
<text x="634.3" y="695.6" font-size="5.6" font-weight="normal" fill="#000" text-anchor="start" textLength="60.4" lengthAdjust="spacingAndGlyphs" stroke="#000" style="stroke-width:calc(var(--k) * 0.25px)">pi : PROPORTIONAL VALVE</text>
<text x="642" y="701.8" font-size="5.6" font-weight="normal" fill="#000" text-anchor="start" textLength="56" lengthAdjust="spacingAndGlyphs" stroke="#000" style="stroke-width:calc(var(--k) * 0.25px)">SECONDARY PRESSURE</text>
</g>
<use href="#d1" transform="translate(15.611 526.169) scale(0.1447 0.1415)" style="--k:0.72"/>
<rect x="54" y="546.3" width="64" height="1.2" fill="#000" shape-rendering="crispEdges"/>
<rect x="54" y="549.3" width="28" height="0.9" fill="#555" shape-rendering="crispEdges"/>
<rect x="48.3" y="543.3" width="74.7" height="81.5" fill="none" stroke="#ff0000" stroke-width="2" shape-rendering="crispEdges"/>
<rect x="119" y="620.5" width="5" height="5" fill="#ff0000" shape-rendering="crispEdges"/>
<rect x="70" y="623.5" width="46" height="1" fill="#40d0e0" shape-rendering="crispEdges"/>
<g shape-rendering="auto">
<text x="1073.8" y="146.8" font-size="10.6" font-weight="bold" fill="#111" text-anchor="start" textLength="183.9" lengthAdjust="spacingAndGlyphs" >21.  MECHATRO CONTROL SYSTEM</text>
<rect x="809.3" y="152" width="449.5" height="1.2" fill="#111"/>
<text x="809.4" y="168.9" font-size="9" font-weight="bold" fill="#000" stroke="#000" stroke-width="0.04" textLength="83" lengthAdjust="spacing">(1)  Positive control</text>
<text x="809.4" y="179.8" font-size="8.87" font-weight="normal" fill="#000" text-anchor="start" stroke="#000" stroke-width="0.04">1.</text>
<text x="822.2" y="179.8" font-size="8.87" font-weight="normal" fill="#000" stroke="#000" stroke-width="0.04" textLength="435.5" lengthAdjust="spacing">On starting any one of operations, pilot secondary pressure switches each spool and is input to each low</text>
<text x="822.2" y="193.0" font-size="8.87" font-weight="normal" fill="#000" stroke="#000" stroke-width="0.04" textLength="65.7" lengthAdjust="spacing">pressure sensor.</text>
<text x="809.4" y="204.8" font-size="8.87" font-weight="normal" fill="#000" text-anchor="start" stroke="#000" stroke-width="0.04">2.</text>
<text x="822.2" y="204.8" font-size="8.87" font-weight="normal" fill="#000" stroke="#000" stroke-width="0.04" textLength="435.5" lengthAdjust="spacing">The output voltage of low pressure sensor is input to mechatro controller and the mechatro controller processes</text>
<text x="822.2" y="218.0" font-size="8.87" font-weight="normal" fill="#000" stroke="#000" stroke-width="0.04" textLength="423" lengthAdjust="spacing">pilot signal and outputs command according to the input voltage to each unload pressure proportional valve.</text>
<text x="809.4" y="230.4" font-size="8.87" font-weight="normal" fill="#000" text-anchor="start" stroke="#000" stroke-width="0.04">3.</text>
<text x="822.2" y="230.4" font-size="8.87" font-weight="normal" fill="#000" stroke="#000" stroke-width="0.04" textLength="435.5" lengthAdjust="spacing">Each pump proportional valve outputs pilot secondary pressure according to the command output by mechatro</text>
<text x="822.2" y="242.9" font-size="8.87" font-weight="normal" fill="#000" stroke="#000" stroke-width="0.04" textLength="327.2" lengthAdjust="spacing">controller and changes the tilting angle of each pump and controls the delivery rate.</text>
<text x="809.4" y="255.3" font-size="8.87" font-weight="normal" fill="#000" text-anchor="start" stroke="#000" stroke-width="0.04">4.</text>
<text x="822.2" y="255.3" font-size="8.87" font-weight="normal" fill="#000" stroke="#000" stroke-width="0.04" textLength="435.5" lengthAdjust="spacing">With this operation, the delivery rate according to lever manipulated movement is fed to the actuator, and</text>
<text x="822.2" y="267.2" font-size="8.87" font-weight="normal" fill="#000" stroke="#000" stroke-width="0.04" textLength="374.7" lengthAdjust="spacing">consequently the working speed according to the lever manipulated movement will be obtained.</text>
<text x="809.4" y="291.2" font-size="8.87" font-weight="normal" fill="#000" text-anchor="start" stroke="#000" stroke-width="0.04">(1)</text>
<text x="822.2" y="291.2" font-size="8.87" font-weight="normal" fill="#000" stroke="#000" stroke-width="0.04" textLength="435.5" lengthAdjust="spacing">The output voltage of high pressure sensor provided on each pump line is input to mechatro controller and the</text>
<text x="822.2" y="303.7" font-size="8.87" font-weight="normal" fill="#000" stroke="#000" stroke-width="0.04" textLength="435.5" lengthAdjust="spacing">mechatro controller processes pilot signal and operates the command according to the input voltage (load</text>
<text x="822.2" y="315.8" font-size="8.87" font-weight="normal" fill="#000" stroke="#000" stroke-width="0.04" textLength="40.3" lengthAdjust="spacing">pressure).</text>
<text x="809.4" y="329.0" font-size="8.87" font-weight="normal" fill="#000" text-anchor="start" stroke="#000" stroke-width="0.04">(2)</text>
<text x="822.2" y="329.0" font-size="8.87" font-weight="normal" fill="#000" stroke="#000" stroke-width="0.04" textLength="435.5" lengthAdjust="spacing">The lower value between command values calculated by positive control and operated value found by P-Q</text>
<text x="822.2" y="341.0" font-size="8.87" font-weight="normal" fill="#000" stroke="#000" stroke-width="0.04" textLength="435.5" lengthAdjust="spacing">control {operated value found in item 1)} is selected and is output to each pump proportional valve as command</text>
<text x="822.2" y="353.8" font-size="8.87" font-weight="normal" fill="#000" stroke="#000" stroke-width="0.04" textLength="23.8" lengthAdjust="spacing">value.</text>
<text x="809.4" y="365.6" font-size="8.87" font-weight="normal" fill="#000" text-anchor="start" stroke="#000" stroke-width="0.04">(3)</text>
<text x="822.2" y="365.6" font-size="8.87" font-weight="normal" fill="#000" stroke="#000" stroke-width="0.04" textLength="435.5" lengthAdjust="spacing">Each pump proportional valve outputs pilot secondary pressure according to the command output by mechatro</text>
<text x="822.2" y="378.5" font-size="8.87" font-weight="normal" fill="#000" stroke="#000" stroke-width="0.04" textLength="311.3" lengthAdjust="spacing">controller and changes tilting angle of each pump and controls the delivery rate.</text>
<text x="809.4" y="390.3" font-size="8.87" font-weight="normal" fill="#000" text-anchor="start" stroke="#000" stroke-width="0.04">(4)</text>
<text x="822.2" y="390.3" font-size="8.87" font-weight="normal" fill="#000" stroke="#000" stroke-width="0.04" textLength="435.5" lengthAdjust="spacing">With this operation, the delivery rate according to lever manipulated movement is fed to actuator and</text>
<text x="822.2" y="402.7" font-size="8.87" font-weight="normal" fill="#000" stroke="#000" stroke-width="0.04" textLength="293.6" lengthAdjust="spacing">consequently working speed will be obtained according to lever movement.</text>
<text x="809.4" y="279.6" font-size="9" font-weight="bold" fill="#000" stroke="#000" stroke-width="0.04" textLength="65" lengthAdjust="spacing">(2)  P-Q control</text>
<rect x="826.2" y="427.7" width="76.6" height="13.6" fill="#fff" stroke="#111" stroke-width="1"/>
<text x="829.7" y="437.1" font-size="8.2" font-weight="normal" fill="#000" text-anchor="start" textLength="69.3" lengthAdjust="spacingAndGlyphs" stroke="#000" stroke-width="0.2">POSITIVE CONTROL</text>
<path d="M828.8 451.4 H1018.8 M828.8 451.4 V573.1 H1018.8" fill="none" stroke="#777" stroke-width="1.0" stroke-dasharray="6 2 1.5 2"/>
<path d="M1018.8 451.4 V573.1" fill="none" stroke="#222" stroke-width="1.0" stroke-dasharray="1.2 5"/>
<rect x="868.3" y="458.9" width="90.5" height="8.3" fill="#fff" stroke="#111" stroke-width="1"/>
<text x="870.1" y="465.1" font-size="7.6" font-weight="normal" fill="#000" text-anchor="start" textLength="85.4" lengthAdjust="spacingAndGlyphs" stroke="#000" stroke-width="0.2">PILOT SIGNAL PROCESS</text>
<path d="M878.9 470.5 V550.7 H982.6" fill="none" stroke="#333" stroke-width="1.1" />
<path d="M878.9 550.7 H915" fill="none" stroke="#000" stroke-width="1.3" />
<path d="M878.9 539.3 H901.7 L962.8 478.9 H979.7" fill="none" stroke="#555" stroke-width="1.1" />
<path d="M870.1 504.6 V493" fill="none" stroke="#666" stroke-width="0.9" />
<path d="M867.4 495.5 L870.1 490.5 L872.8 495.5 Z" fill="#111"/>
<text x="867" y="513" font-size="7.2" font-weight="normal" fill="#999" text-anchor="start" textLength="6.5" lengthAdjust="spacingAndGlyphs" >Pi</text>
<path d="M957.3 556.6 H968" fill="none" stroke="#111" stroke-width="1" />
<path d="M966 554 L971 556.6 L966 559.2 Z" fill="#111"/>
<text x="911.2" y="567.8" font-size="8.2" font-weight="normal" fill="#000" text-anchor="start" textLength="60.8" lengthAdjust="spacingAndGlyphs" stroke="#000" stroke-width="0.2">PILOT PRESSURE</text>
<text x="0" y="0" font-size="8" fill="#000" stroke="#000" stroke-width="0.2" textLength="77.7" lengthAdjust="spacingAndGlyphs" transform="translate(840.2 546.8) rotate(-90)">PUMP PROPORTIONAL</text>
<text x="0" y="0" font-size="8" fill="#000" stroke="#000" stroke-width="0.2" textLength="84.9" lengthAdjust="spacingAndGlyphs" transform="translate(848.2 546.8) rotate(-90)">SECONDARY PRESSURE</text>
<rect x="1058.1" y="427.7" width="58.5" height="13.8" fill="#fff" stroke="#111" stroke-width="1"/>
<text x="1063.5" y="437.1" font-size="8.2" font-weight="normal" fill="#000" text-anchor="start" textLength="48.5" lengthAdjust="spacingAndGlyphs" stroke="#000" stroke-width="0.2">P-Q CONTROL</text>
<path d="M1058.4 451.4 H1248.9 M1058.4 451.4 V573.2 H1248.9" fill="none" stroke="#777" stroke-width="1.0" stroke-dasharray="6 2 1.5 2"/>
<path d="M1248.9 451.4 V573.2" fill="none" stroke="#222" stroke-width="1.0" stroke-dasharray="1.2 5"/>
<rect x="1101.6" y="458.9" width="89.7" height="8.4" fill="#fff" stroke="#111" stroke-width="1"/>
<text x="1103" y="465.1" font-size="7.6" font-weight="normal" fill="#000" text-anchor="start" textLength="86.4" lengthAdjust="spacingAndGlyphs" stroke="#000" stroke-width="0.2">PILOT SIGNAL PROCESS</text>
<path d="M1108.5 472.7 V550.8 H1212.2" fill="none" stroke="#222" stroke-width="1.1" />
<path d="M1108.5 483.3 L1150.7 485.3 C1158 497 1163 505 1170 513 C1182 527 1196 535 1210 539.8" fill="none" stroke="#222" stroke-width="1.1" />
<path d="M1099.5 504.6 V493" fill="none" stroke="#666" stroke-width="0.9" />
<path d="M1096.8 495.5 L1099.5 490.5 L1102.2 495.5 Z" fill="#111"/>
<text x="1097" y="513" font-size="7.2" font-weight="normal" fill="#999" text-anchor="start" textLength="6.5" lengthAdjust="spacingAndGlyphs" >Pi</text>
<path d="M1186.7 556.6 H1197" fill="none" stroke="#111" stroke-width="1" />
<path d="M1195 554 L1200 556.6 L1195 559.2 Z" fill="#111"/>
<text x="1107.6" y="567.8" font-size="8.2" font-weight="normal" fill="#000" text-anchor="start" textLength="98.4" lengthAdjust="spacingAndGlyphs" stroke="#000" stroke-width="0.2">PUMP DELIVERY PRESSURE</text>
<text x="0" y="0" font-size="8" fill="#000" stroke="#000" stroke-width="0.2" textLength="78.6" lengthAdjust="spacingAndGlyphs" transform="translate(1074.8 546) rotate(-90)">PUMP PROPORTIONAL</text>
<text x="0" y="0" font-size="8" fill="#000" stroke="#000" stroke-width="0.2" textLength="84.9" lengthAdjust="spacingAndGlyphs" transform="translate(1082.5 546) rotate(-90)">SECONDARY PRESSURE</text>
<rect x="1258.8" y="465" width="29.4" height="66" fill="#000"/>
<text x="1266.5" y="498.6" font-size="12" font-weight="bold" fill="#fff" text-anchor="start" textLength="14.7" lengthAdjust="spacingAndGlyphs" >21</text>
</g>
</svg></body></html>
